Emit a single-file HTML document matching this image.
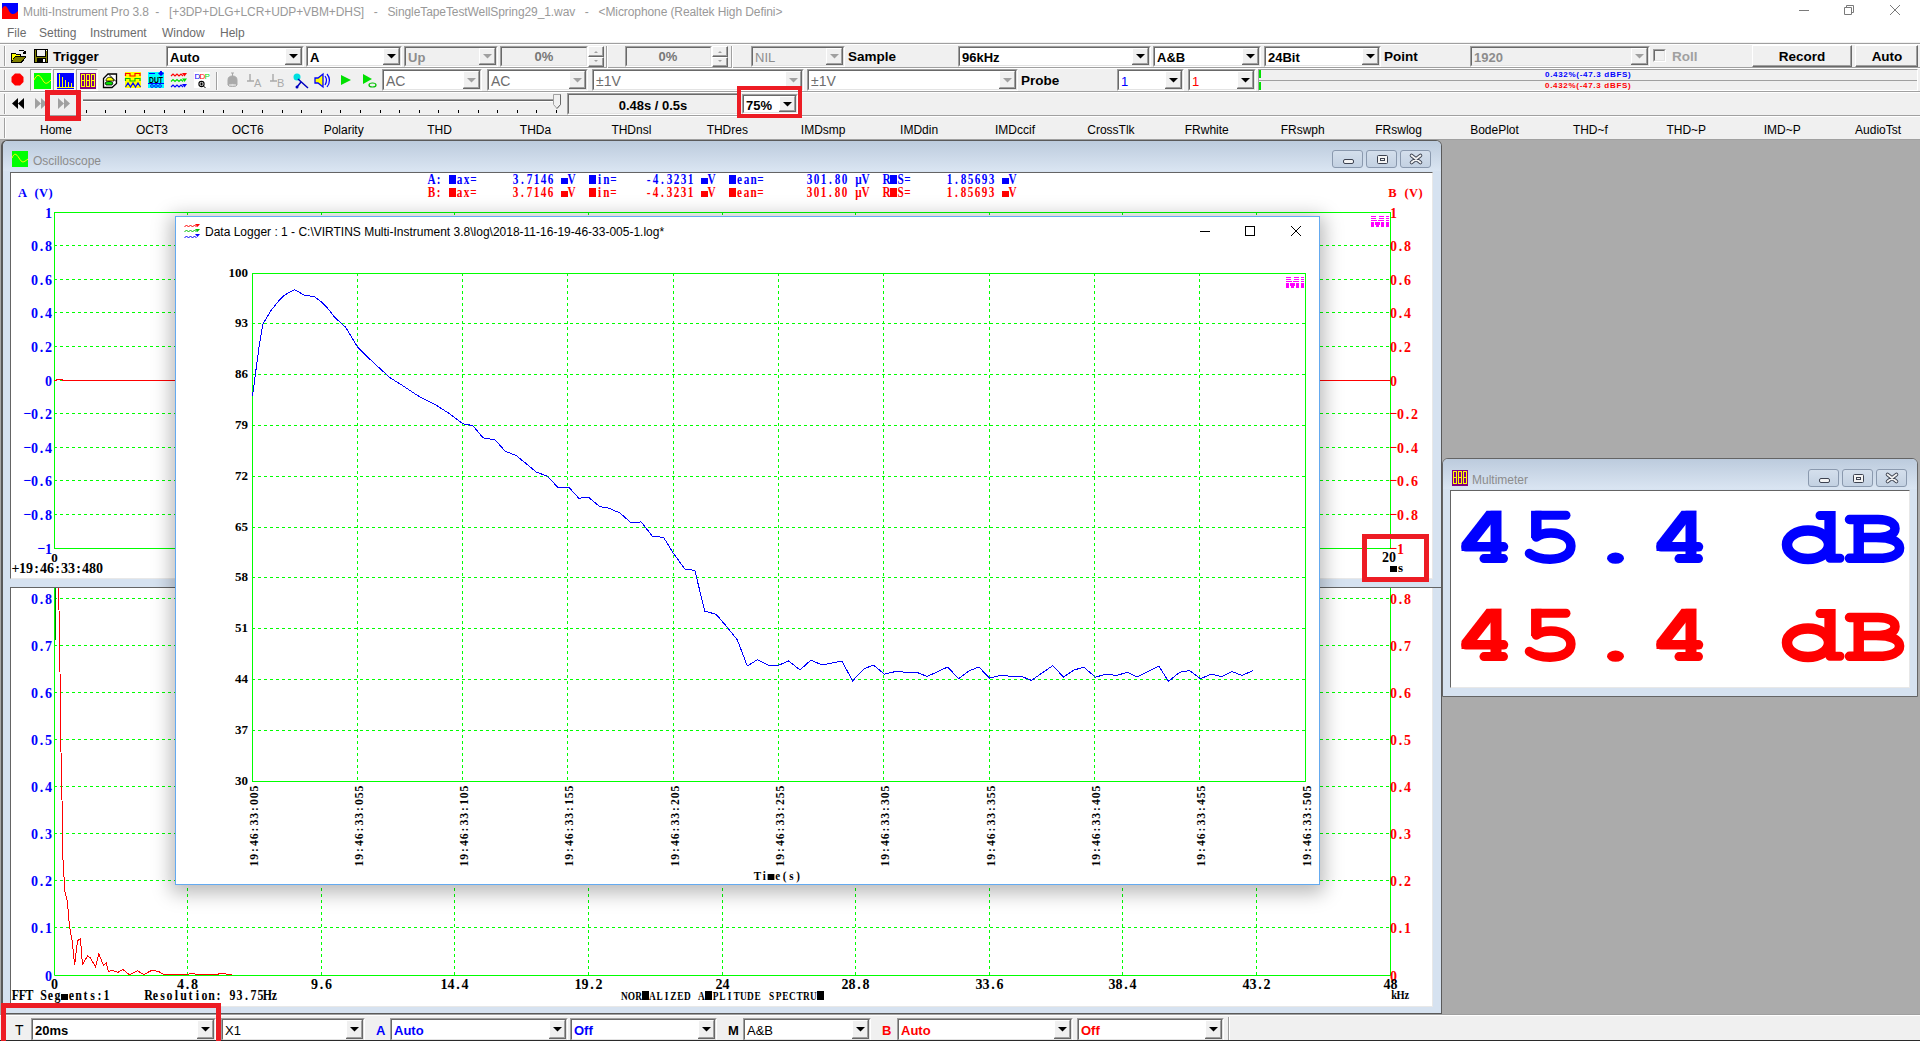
<!DOCTYPE html><html><head><meta charset="utf-8"><style>
html,body{margin:0;padding:0;width:1920px;height:1041px;overflow:hidden;background:#ababab;}
body div, body svg{position:absolute;}
svg{overflow:visible;}
</style></head><body><div style="left:0px;top:0px;width:1920px;height:42px;background:#fff;"></div>
<svg style="left:2px;top:3px" width="16" height="16"><rect width="16" height="16" fill="#0000ff"/><path d="M0 6 C2 2,4 2,6 6 S9 11,11 11 S14 10,16 8 V16 H0Z" fill="#ff0000"/></svg>
<div style="left:23.00px;top:5.04px;line-height:12px;height:12px;font:400 12px 'Liberation Sans', sans-serif;color:#999999;white-space:pre;letter-spacing:-0.09px;">Multi-Instrument Pro 3.8  -   [+3DP+DLG+LCR+UDP+VBM+DHS]   -   SingleTapeTestWellSpring29_1.wav   -   &lt;Microphone (Realtek High Defini&gt;</div>
<div style="left:1799px;top:10px;width:10px;height:1px;background:#7a7a7a;"></div>
<svg style="left:1840px;top:0px" width="20" height="20"><path d="M4.5 7.5h7v7h-7z M6.5 7.5v-2h7v7h-2" fill="none" stroke="#7a7a7a" stroke-width="1"/></svg>
<svg style="left:1885px;top:0px" width="20" height="20"><path d="M5 5L15 15M15 5L5 15" stroke="#7a7a7a" stroke-width="1"/></svg>
<div style="left:7.00px;top:26.04px;line-height:12px;height:12px;font:400 12px 'Liberation Sans', sans-serif;color:#6b6b6b;white-space:pre;">File</div>
<div style="left:39.00px;top:26.04px;line-height:12px;height:12px;font:400 12px 'Liberation Sans', sans-serif;color:#6b6b6b;white-space:pre;">Setting</div>
<div style="left:90.00px;top:26.04px;line-height:12px;height:12px;font:400 12px 'Liberation Sans', sans-serif;color:#6b6b6b;white-space:pre;">Instrument</div>
<div style="left:162.00px;top:26.04px;line-height:12px;height:12px;font:400 12px 'Liberation Sans', sans-serif;color:#6b6b6b;white-space:pre;">Window</div>
<div style="left:220.00px;top:26.04px;line-height:12px;height:12px;font:400 12px 'Liberation Sans', sans-serif;color:#6b6b6b;white-space:pre;">Help</div>
<div style="left:0px;top:42px;width:1920px;height:98px;background:#f0f0f0;"></div>
<div style="left:0px;top:43px;width:1920px;height:1px;background:#a0a0a0;"></div>
<div style="left:0px;top:44px;width:1920px;height:1px;background:#fff;"></div>
<div style="left:0px;top:67px;width:1920px;height:1px;background:#a0a0a0;"></div>
<div style="left:0px;top:68px;width:1920px;height:1px;background:#fff;"></div>
<div style="left:0px;top:91px;width:1920px;height:1px;background:#a0a0a0;"></div>
<div style="left:0px;top:92px;width:1920px;height:1px;background:#fff;"></div>
<div style="left:0px;top:115px;width:1920px;height:1px;background:#a0a0a0;"></div>
<div style="left:0px;top:116px;width:1920px;height:1px;background:#fff;"></div>
<div style="left:0px;top:139px;width:1920px;height:1px;background:#a0a0a0;"></div>
<div style="left:4px;top:46px;width:1px;height:20px;background:#a0a0a0;"></div>
<div style="left:5px;top:46px;width:1px;height:20px;background:#fff;"></div>
<div style="left:4px;top:70px;width:1px;height:20px;background:#a0a0a0;"></div>
<div style="left:5px;top:70px;width:1px;height:20px;background:#fff;"></div>
<div style="left:4px;top:94px;width:1px;height:20px;background:#a0a0a0;"></div>
<div style="left:5px;top:94px;width:1px;height:20px;background:#fff;"></div>
<div style="left:4px;top:118px;width:1px;height:20px;background:#a0a0a0;"></div>
<div style="left:5px;top:118px;width:1px;height:20px;background:#fff;"></div>
<svg style="left:10px;top:48px" width="18" height="16" shape-rendering="crispEdges"><path d="M1 5H5L6 6H11V8H16V9L12 15H1Z" fill="#000"/><path d="M2 6H5L6 7H10V8H5L2 13Z" fill="#ffff00"/><path d="M5 9H15L11 14H2Z" fill="#808000"/><path d="M9 3L10 2H13L15 4" fill="none" stroke="#000"/><path d="M14 3H16V6H13Z" fill="#000"/></svg>
<svg style="left:34px;top:49px" width="15" height="15" shape-rendering="crispEdges"><rect x="0" y="0" width="14" height="14" fill="#000"/><rect x="1" y="1" width="12" height="12" fill="#808000"/><rect x="2" y="0" width="10" height="8" fill="#000"/><rect x="3" y="1" width="8" height="6" fill="#f0f0f0"/><rect x="3" y="9" width="9" height="5" fill="#000"/><rect x="9" y="10" width="2" height="3" fill="#fff"/><rect x="12" y="1" width="1" height="1" fill="#fff"/></svg>
<div style="left:53.00px;top:49.07px;line-height:13.5px;height:13.5px;font:700 13.5px 'Liberation Sans', sans-serif;color:#000;white-space:pre;">Trigger</div>
<div style="left:166px;top:46px;width:138px;height:21px;background:#fff;border-top:1px solid #a0a0a0;border-left:1px solid #a0a0a0;border-bottom:1px solid #fff;border-right:1px solid #fff;box-sizing:border-box;"></div>
<div style="left:167px;top:47px;width:136px;height:19px;border-top:1px solid #696969;border-left:1px solid #696969;border-bottom:1px solid #e3e3e3;border-right:1px solid #e3e3e3;box-sizing:border-box;"></div>
<div style="left:285px;top:48px;width:17px;height:17px;background:#f0f0f0;border-right:1px solid #696969;border-bottom:1px solid #696969;box-sizing:border-box;"></div>
<div style="left:285px;top:48px;width:16px;height:16px;border-top:1px solid #fff;border-left:1px solid #fff;border-right:1px solid #a0a0a0;border-bottom:1px solid #a0a0a0;box-sizing:border-box;"></div>
<svg style="left:289px;top:54px" width="9" height="5"><path d="M0 0H9L4.5 4.5Z" fill="#000"/></svg>
<div style="left:170.00px;top:50.18px;line-height:13px;height:13px;font:700 13px 'Liberation Sans', sans-serif;color:#000;white-space:pre;">Auto</div>
<div style="left:306px;top:46px;width:96px;height:21px;background:#fff;border-top:1px solid #a0a0a0;border-left:1px solid #a0a0a0;border-bottom:1px solid #fff;border-right:1px solid #fff;box-sizing:border-box;"></div>
<div style="left:307px;top:47px;width:94px;height:19px;border-top:1px solid #696969;border-left:1px solid #696969;border-bottom:1px solid #e3e3e3;border-right:1px solid #e3e3e3;box-sizing:border-box;"></div>
<div style="left:383px;top:48px;width:17px;height:17px;background:#f0f0f0;border-right:1px solid #696969;border-bottom:1px solid #696969;box-sizing:border-box;"></div>
<div style="left:383px;top:48px;width:16px;height:16px;border-top:1px solid #fff;border-left:1px solid #fff;border-right:1px solid #a0a0a0;border-bottom:1px solid #a0a0a0;box-sizing:border-box;"></div>
<svg style="left:387px;top:54px" width="9" height="5"><path d="M0 0H9L4.5 4.5Z" fill="#000"/></svg>
<div style="left:310.00px;top:50.18px;line-height:13px;height:13px;font:700 13px 'Liberation Sans', sans-serif;color:#000;white-space:pre;">A</div>
<div style="left:404px;top:46px;width:94px;height:21px;background:#f0f0f0;border-top:1px solid #a0a0a0;border-left:1px solid #a0a0a0;border-bottom:1px solid #fff;border-right:1px solid #fff;box-sizing:border-box;"></div>
<div style="left:405px;top:47px;width:92px;height:19px;border-top:1px solid #696969;border-left:1px solid #696969;border-bottom:1px solid #e3e3e3;border-right:1px solid #e3e3e3;box-sizing:border-box;"></div>
<div style="left:479px;top:48px;width:17px;height:17px;background:#f0f0f0;border-right:1px solid #696969;border-bottom:1px solid #696969;box-sizing:border-box;"></div>
<div style="left:479px;top:48px;width:16px;height:16px;border-top:1px solid #fff;border-left:1px solid #fff;border-right:1px solid #a0a0a0;border-bottom:1px solid #a0a0a0;box-sizing:border-box;"></div>
<svg style="left:483px;top:54px" width="9" height="5"><path d="M0 0H9L4.5 4.5Z" fill="#a0a0a0"/></svg>
<div style="left:408.00px;top:50.18px;line-height:13px;height:13px;font:700 13px 'Liberation Sans', sans-serif;color:#8d8d8d;white-space:pre;">Up</div>
<div style="left:500px;top:46px;width:88px;height:21px;background:#f0f0f0;border-top:1px solid #a0a0a0;border-left:1px solid #a0a0a0;border-bottom:1px solid #fff;border-right:1px solid #fff;box-sizing:border-box;"></div>
<div style="left:501px;top:47px;width:86px;height:19px;border-top:1px solid #696969;border-left:1px solid #696969;border-bottom:1px solid #e3e3e3;border-right:1px solid #e3e3e3;box-sizing:border-box;"></div>
<div style="left:504.00px;top:49.30px;line-height:13px;height:13px;font:700 13px 'Liberation Sans', sans-serif;color:#777777;white-space:pre;width:80px;text-align:center;">0%</div>
<div style="left:588px;top:46px;width:16px;height:11px;background:#f0f0f0;border-top:1px solid #fff;border-left:1px solid #fff;border-right:1px solid #696969;border-bottom:1px solid #696969;box-sizing:border-box;"></div>
<div style="left:589px;top:47px;width:14px;height:9px;border-right:1px solid #a0a0a0;border-bottom:1px solid #a0a0a0;box-sizing:border-box;"></div>
<div style="left:588px;top:57px;width:16px;height:10px;background:#f0f0f0;border-top:1px solid #fff;border-left:1px solid #fff;border-right:1px solid #696969;border-bottom:1px solid #696969;box-sizing:border-box;"></div>
<div style="left:589px;top:58px;width:14px;height:8px;border-right:1px solid #a0a0a0;border-bottom:1px solid #a0a0a0;box-sizing:border-box;"></div>
<svg style="left:593px;top:50px" width="6" height="14"><path d="M1 3h4L3 1z M1 10h4L3 12z" fill="#a0a0a0"/></svg>
<div style="left:606px;top:46px;width:1px;height:22px;background:#a0a0a0;"></div>
<div style="left:607px;top:46px;width:1px;height:22px;background:#fff;"></div>
<div style="left:625px;top:46px;width:87px;height:21px;background:#f0f0f0;border-top:1px solid #a0a0a0;border-left:1px solid #a0a0a0;border-bottom:1px solid #fff;border-right:1px solid #fff;box-sizing:border-box;"></div>
<div style="left:626px;top:47px;width:85px;height:19px;border-top:1px solid #696969;border-left:1px solid #696969;border-bottom:1px solid #e3e3e3;border-right:1px solid #e3e3e3;box-sizing:border-box;"></div>
<div style="left:628.00px;top:49.30px;line-height:13px;height:13px;font:700 13px 'Liberation Sans', sans-serif;color:#777777;white-space:pre;width:80px;text-align:center;">0%</div>
<div style="left:712px;top:46px;width:16px;height:11px;background:#f0f0f0;border-top:1px solid #fff;border-left:1px solid #fff;border-right:1px solid #696969;border-bottom:1px solid #696969;box-sizing:border-box;"></div>
<div style="left:713px;top:47px;width:14px;height:9px;border-right:1px solid #a0a0a0;border-bottom:1px solid #a0a0a0;box-sizing:border-box;"></div>
<div style="left:712px;top:57px;width:16px;height:10px;background:#f0f0f0;border-top:1px solid #fff;border-left:1px solid #fff;border-right:1px solid #696969;border-bottom:1px solid #696969;box-sizing:border-box;"></div>
<div style="left:713px;top:58px;width:14px;height:8px;border-right:1px solid #a0a0a0;border-bottom:1px solid #a0a0a0;box-sizing:border-box;"></div>
<svg style="left:717px;top:50px" width="6" height="14"><path d="M1 3h4L3 1z M1 10h4L3 12z" fill="#a0a0a0"/></svg>
<div style="left:731px;top:46px;width:1px;height:22px;background:#a0a0a0;"></div>
<div style="left:732px;top:46px;width:1px;height:22px;background:#fff;"></div>
<div style="left:751px;top:46px;width:94px;height:21px;background:#f0f0f0;border-top:1px solid #a0a0a0;border-left:1px solid #a0a0a0;border-bottom:1px solid #fff;border-right:1px solid #fff;box-sizing:border-box;"></div>
<div style="left:752px;top:47px;width:92px;height:19px;border-top:1px solid #696969;border-left:1px solid #696969;border-bottom:1px solid #e3e3e3;border-right:1px solid #e3e3e3;box-sizing:border-box;"></div>
<div style="left:826px;top:48px;width:17px;height:17px;background:#f0f0f0;border-right:1px solid #696969;border-bottom:1px solid #696969;box-sizing:border-box;"></div>
<div style="left:826px;top:48px;width:16px;height:16px;border-top:1px solid #fff;border-left:1px solid #fff;border-right:1px solid #a0a0a0;border-bottom:1px solid #a0a0a0;box-sizing:border-box;"></div>
<svg style="left:830px;top:54px" width="9" height="5"><path d="M0 0H9L4.5 4.5Z" fill="#a0a0a0"/></svg>
<div style="left:755.00px;top:50.18px;line-height:13px;height:13px;font:400 13px 'Liberation Sans', sans-serif;color:#8d8d8d;white-space:pre;">NIL</div>
<div style="left:848.00px;top:49.07px;line-height:13.5px;height:13.5px;font:700 13.5px 'Liberation Sans', sans-serif;color:#000;white-space:pre;">Sample</div>
<div style="left:958px;top:46px;width:193px;height:21px;background:#fff;border-top:1px solid #a0a0a0;border-left:1px solid #a0a0a0;border-bottom:1px solid #fff;border-right:1px solid #fff;box-sizing:border-box;"></div>
<div style="left:959px;top:47px;width:191px;height:19px;border-top:1px solid #696969;border-left:1px solid #696969;border-bottom:1px solid #e3e3e3;border-right:1px solid #e3e3e3;box-sizing:border-box;"></div>
<div style="left:1132px;top:48px;width:17px;height:17px;background:#f0f0f0;border-right:1px solid #696969;border-bottom:1px solid #696969;box-sizing:border-box;"></div>
<div style="left:1132px;top:48px;width:16px;height:16px;border-top:1px solid #fff;border-left:1px solid #fff;border-right:1px solid #a0a0a0;border-bottom:1px solid #a0a0a0;box-sizing:border-box;"></div>
<svg style="left:1136px;top:54px" width="9" height="5"><path d="M0 0H9L4.5 4.5Z" fill="#000"/></svg>
<div style="left:962.00px;top:50.18px;line-height:13px;height:13px;font:700 13px 'Liberation Sans', sans-serif;color:#000;white-space:pre;">96kHz</div>
<div style="left:1153px;top:46px;width:108px;height:21px;background:#fff;border-top:1px solid #a0a0a0;border-left:1px solid #a0a0a0;border-bottom:1px solid #fff;border-right:1px solid #fff;box-sizing:border-box;"></div>
<div style="left:1154px;top:47px;width:106px;height:19px;border-top:1px solid #696969;border-left:1px solid #696969;border-bottom:1px solid #e3e3e3;border-right:1px solid #e3e3e3;box-sizing:border-box;"></div>
<div style="left:1242px;top:48px;width:17px;height:17px;background:#f0f0f0;border-right:1px solid #696969;border-bottom:1px solid #696969;box-sizing:border-box;"></div>
<div style="left:1242px;top:48px;width:16px;height:16px;border-top:1px solid #fff;border-left:1px solid #fff;border-right:1px solid #a0a0a0;border-bottom:1px solid #a0a0a0;box-sizing:border-box;"></div>
<svg style="left:1246px;top:54px" width="9" height="5"><path d="M0 0H9L4.5 4.5Z" fill="#000"/></svg>
<div style="left:1157.00px;top:50.18px;line-height:13px;height:13px;font:700 13px 'Liberation Sans', sans-serif;color:#000;white-space:pre;">A&amp;B</div>
<div style="left:1264px;top:46px;width:117px;height:21px;background:#fff;border-top:1px solid #a0a0a0;border-left:1px solid #a0a0a0;border-bottom:1px solid #fff;border-right:1px solid #fff;box-sizing:border-box;"></div>
<div style="left:1265px;top:47px;width:115px;height:19px;border-top:1px solid #696969;border-left:1px solid #696969;border-bottom:1px solid #e3e3e3;border-right:1px solid #e3e3e3;box-sizing:border-box;"></div>
<div style="left:1362px;top:48px;width:17px;height:17px;background:#f0f0f0;border-right:1px solid #696969;border-bottom:1px solid #696969;box-sizing:border-box;"></div>
<div style="left:1362px;top:48px;width:16px;height:16px;border-top:1px solid #fff;border-left:1px solid #fff;border-right:1px solid #a0a0a0;border-bottom:1px solid #a0a0a0;box-sizing:border-box;"></div>
<svg style="left:1366px;top:54px" width="9" height="5"><path d="M0 0H9L4.5 4.5Z" fill="#000"/></svg>
<div style="left:1268.00px;top:50.18px;line-height:13px;height:13px;font:700 13px 'Liberation Sans', sans-serif;color:#000;white-space:pre;">24Bit</div>
<div style="left:1384.00px;top:49.07px;line-height:13.5px;height:13.5px;font:700 13.5px 'Liberation Sans', sans-serif;color:#000;white-space:pre;">Point</div>
<div style="left:1470px;top:46px;width:180px;height:21px;background:#f0f0f0;border-top:1px solid #a0a0a0;border-left:1px solid #a0a0a0;border-bottom:1px solid #fff;border-right:1px solid #fff;box-sizing:border-box;"></div>
<div style="left:1471px;top:47px;width:178px;height:19px;border-top:1px solid #696969;border-left:1px solid #696969;border-bottom:1px solid #e3e3e3;border-right:1px solid #e3e3e3;box-sizing:border-box;"></div>
<div style="left:1631px;top:48px;width:17px;height:17px;background:#f0f0f0;border-right:1px solid #696969;border-bottom:1px solid #696969;box-sizing:border-box;"></div>
<div style="left:1631px;top:48px;width:16px;height:16px;border-top:1px solid #fff;border-left:1px solid #fff;border-right:1px solid #a0a0a0;border-bottom:1px solid #a0a0a0;box-sizing:border-box;"></div>
<svg style="left:1635px;top:54px" width="9" height="5"><path d="M0 0H9L4.5 4.5Z" fill="#a0a0a0"/></svg>
<div style="left:1474.00px;top:50.18px;line-height:13px;height:13px;font:700 13px 'Liberation Sans', sans-serif;color:#8d8d8d;white-space:pre;">1920</div>
<div style="left:1653px;top:49px;width:13px;height:13px;background:#f0f0f0;border-top:1px solid #a0a0a0;border-left:1px solid #a0a0a0;border-bottom:1px solid #fff;border-right:1px solid #fff;box-sizing:border-box;"></div>
<div style="left:1654px;top:50px;width:11px;height:11px;border-top:1px solid #696969;border-left:1px solid #696969;border-bottom:1px solid #e3e3e3;border-right:1px solid #e3e3e3;box-sizing:border-box;"></div>
<div style="left:1672.00px;top:48.57px;line-height:13.5px;height:13.5px;font:700 13.5px 'Liberation Sans', sans-serif;color:#a0a0a0;white-space:pre;">Roll</div>
<div style="left:1752px;top:45px;width:100px;height:22px;background:#f0f0f0;border-top:1px solid #fff;border-left:1px solid #fff;border-right:1px solid #696969;border-bottom:1px solid #696969;box-sizing:border-box;"></div>
<div style="left:1753px;top:46px;width:98px;height:20px;border-right:1px solid #a0a0a0;border-bottom:1px solid #a0a0a0;box-sizing:border-box;"></div>
<div style="left:1752.00px;top:48.57px;line-height:13.5px;height:13.5px;font:700 13.5px 'Liberation Sans', sans-serif;color:#000;white-space:pre;width:100px;text-align:center;">Record</div>
<div style="left:1855px;top:45px;width:63px;height:22px;background:#f0f0f0;border-top:1px solid #fff;border-left:1px solid #fff;border-right:1px solid #696969;border-bottom:1px solid #696969;box-sizing:border-box;"></div>
<div style="left:1856px;top:46px;width:61px;height:20px;border-right:1px solid #a0a0a0;border-bottom:1px solid #a0a0a0;box-sizing:border-box;"></div>
<div style="left:1855.50px;top:48.57px;line-height:13.5px;height:13.5px;font:700 13.5px 'Liberation Sans', sans-serif;color:#000;white-space:pre;width:63px;text-align:center;">Auto</div>
<svg style="left:11px;top:73px" width="14" height="13"><path d="M4 0.5h5l3.5 3.5v5l-3.5 3.5h-5l-3.5-3.5v-5z" fill="#ff0000"/></svg>
<div style="left:30px;top:69px;width:22px;height:22px;border-top:1px solid #a0a0a0;border-left:1px solid #a0a0a0;border-right:1px solid #fff;border-bottom:1px solid #fff;box-sizing:border-box;background:#f6f6f6;"></div>
<div style="left:53px;top:69px;width:22px;height:22px;border-top:1px solid #a0a0a0;border-left:1px solid #a0a0a0;border-right:1px solid #fff;border-bottom:1px solid #fff;box-sizing:border-box;background:#f6f6f6;"></div>
<div style="left:76px;top:69px;width:22px;height:22px;border-top:1px solid #a0a0a0;border-left:1px solid #a0a0a0;border-right:1px solid #fff;border-bottom:1px solid #fff;box-sizing:border-box;background:#f6f6f6;"></div>
<svg style="left:34px;top:73px" width="17" height="16"><rect width="17" height="16" fill="#00ff00"/><path d="M0 7 C3 1,5 1,8 6 S12 12,17 7" fill="none" stroke="#ffff00" stroke-width="1"/></svg>
<svg style="left:57px;top:73px" width="17" height="16"><rect width="17" height="16" fill="#0000ff"/><path d="M2.5 14V1M5.5 14V4M8.5 14V7M11.5 14V9M14.5 14V10M0 14.5H17" stroke="#ffff00" stroke-width="1"/></svg>
<svg style="left:80px;top:73px" width="16" height="16"><rect width="16" height="16" fill="#800080"/><rect x="1.5" y="1.5" width="3" height="12" fill="none" stroke="#ffff00" stroke-width="1"/><path d="M1.5 7.5h3" stroke="#ffff00"/><rect x="6.5" y="1.5" width="3" height="12" fill="none" stroke="#ffff00" stroke-width="1"/><path d="M6.5 7.5h3" stroke="#ffff00"/><rect x="11.5" y="1.5" width="3" height="12" fill="none" stroke="#ffff00" stroke-width="1"/><path d="M11.5 7.5h3" stroke="#ffff00"/></svg>
<svg style="left:102px;top:72px" width="17" height="17"><path d="M1.5 6.5L6 2H14.5V11.5L10 15.5H1.5Z" fill="#fff" stroke="#000" stroke-width="1.3"/><path d="M7 2.5L14 9.5" stroke="#000" stroke-width="1"/><path d="M4 8.5C4 5 9 4 11 7L12 9H4Z" fill="#ffff00" stroke="#000" stroke-width=".8"/><path d="M3 11C4 9 10 9 11 11L10 13H4Z" fill="#00e000" stroke="#000" stroke-width=".8"/></svg>
<svg style="left:125px;top:72px" width="16" height="16"><rect width="16" height="16" fill="#ffff00"/><path d="M0.5 4V1.5H5V4H10V1.5H15V4" fill="none" stroke="#ff0000" stroke-width="1.2"/><path d="M0.5 9V6.5H5V9H10V6.5H15V9" fill="none" stroke="#00c000" stroke-width="1.2"/><path d="M0.5 15L3 11L5.5 15L8 11L10.5 15L13 11L15.5 15" fill="none" stroke="#0000ff" stroke-width="1.2"/></svg>
<svg style="left:148px;top:72px" width="16" height="16"><rect width="16" height="16" fill="#00ffff"/><path d="M1 1.5H7M11 1.5L13 0V3ZM15 1.5L13 0V3Z" stroke="#0000ff" stroke-width="1.2" fill="#0000ff"/><text x="8" y="11" font-family="Liberation Sans" font-weight="700" font-size="8.5" fill="#000" text-anchor="middle" textLength="14" lengthAdjust="spacingAndGlyphs">DUT</text><path d="M0 11.5H16" stroke="#0000ff"/><circle cx="4" cy="14" r="1.4" fill="none" stroke="#0000ff" stroke-width=".9"/><circle cx="8" cy="14" r="1.4" fill="none" stroke="#0000ff" stroke-width=".9"/><circle cx="12" cy="14" r="1.4" fill="none" stroke="#0000ff" stroke-width=".9"/></svg>
<svg style="left:171px;top:72px" width="17" height="17"><path d="M0 4l2-2 2 2 2-2 2 2 2-2 2 2" fill="none" stroke="#ff0000" stroke-width="1.2"/><path d="M11 1h5l-2.5 3.5z" fill="#ff0000"/><path d="M0 9.5l2-2 2 2 2-2 2 2 2-2 2 2" fill="none" stroke="#00e000" stroke-width="1.2"/><path d="M11 6.5h5l-2.5 3.5z" fill="#00e000"/><path d="M0 15l2-2 2 2 2-2 2 2 2-2 2 2" fill="none" stroke="#0000ff" stroke-width="1.2"/><path d="M11 12h5l-2.5 3.5z" fill="#0000ff"/></svg>
<svg style="left:194px;top:72px" width="16" height="16"><rect width="16" height="16" fill="#fff"/><text x="0.5" y="7" font-family="Liberation Sans" font-size="8" fill="#0000ff">D</text><text x="5.5" y="7" font-family="Liberation Sans" font-size="8" fill="#ff0000">D</text><text x="10.5" y="7" font-family="Liberation Sans" font-size="8" fill="#00e000">P</text><circle cx="7.5" cy="12" r="2.6" fill="none" stroke="#000" stroke-width="1.1"/><path d="M9.5 14l2 2M6 12h3M7.5 10.5v3" stroke="#000" stroke-width="1"/></svg>
<div style="left:216px;top:72px;width:1px;height:18px;background:#a0a0a0;"></div>
<div style="left:217px;top:72px;width:1px;height:18px;background:#fff;"></div>
<svg style="left:224px;top:72px" width="16" height="16"><path d="M7 1h3M8.5 1v3M4 8C4 5 6 4 8.5 4S13 5 13 8v5H4z" fill="#a9a9a9" stroke="#a9a9a9"/><ellipse cx="8.5" cy="13" rx="4.5" ry="1.5" fill="#dcdcdc" stroke="#a9a9a9"/></svg>
<svg style="left:246px;top:72px" width="18" height="16"><path d="M4 2v7M1 9h7" stroke="#a9a9a9" stroke-width="1.4"/><text x="8" y="15" font-family="Liberation Sans" font-size="11" fill="#a9a9a9">A</text></svg>
<svg style="left:269px;top:72px" width="18" height="16"><path d="M4 2v7M1 9h7" stroke="#a9a9a9" stroke-width="1.4"/><text x="8" y="15" font-family="Liberation Sans" font-size="11" fill="#a9a9a9">B</text></svg>
<svg style="left:292px;top:72px" width="17" height="17"><circle cx="5" cy="5" r="3.5" fill="#00e0e0"/><path d="M6 7l10 9M9 10l-4 5" stroke="#0000c0" stroke-width="1.5"/><circle cx="5" cy="15" r="1.5" fill="#0000c0"/></svg>
<svg style="left:314px;top:72px" width="17" height="17"><path d="M1 6h3l5-4v13l-5-4H1z" fill="#ffff00" stroke="#0000ff" stroke-width="1.3"/><path d="M11 4q3 4 0 9M13 2q5 6 0 13" fill="none" stroke="#0000ff" stroke-width="1.2"/></svg>
<svg style="left:340px;top:74px" width="12" height="12"><path d="M1 1v10l10-5z" fill="#00e000"/></svg>
<svg style="left:362px;top:73px" width="15" height="15"><path d="M1 1v10l9-5z" fill="#00e000"/><ellipse cx="10.5" cy="12" rx="3.5" ry="2" fill="none" stroke="#00c000" stroke-width="1.2"/></svg>
<div style="left:382px;top:69px;width:100px;height:22px;background:#fff;border-top:1px solid #a0a0a0;border-left:1px solid #a0a0a0;border-bottom:1px solid #fff;border-right:1px solid #fff;box-sizing:border-box;"></div>
<div style="left:383px;top:70px;width:98px;height:20px;border-top:1px solid #696969;border-left:1px solid #696969;border-bottom:1px solid #e3e3e3;border-right:1px solid #e3e3e3;box-sizing:border-box;"></div>
<div style="left:463px;top:71px;width:17px;height:18px;background:#f0f0f0;border-right:1px solid #696969;border-bottom:1px solid #696969;box-sizing:border-box;"></div>
<div style="left:463px;top:71px;width:16px;height:17px;border-top:1px solid #fff;border-left:1px solid #fff;border-right:1px solid #a0a0a0;border-bottom:1px solid #a0a0a0;box-sizing:border-box;"></div>
<svg style="left:467px;top:78px" width="9" height="5"><path d="M0 0H9L4.5 4.5Z" fill="#a0a0a0"/></svg>
<div style="left:386.00px;top:73.19px;line-height:14px;height:14px;font:400 14px 'Liberation Sans', sans-serif;color:#6d6d6d;white-space:pre;">AC</div>
<div style="left:487px;top:69px;width:101px;height:22px;background:#fff;border-top:1px solid #a0a0a0;border-left:1px solid #a0a0a0;border-bottom:1px solid #fff;border-right:1px solid #fff;box-sizing:border-box;"></div>
<div style="left:488px;top:70px;width:99px;height:20px;border-top:1px solid #696969;border-left:1px solid #696969;border-bottom:1px solid #e3e3e3;border-right:1px solid #e3e3e3;box-sizing:border-box;"></div>
<div style="left:569px;top:71px;width:17px;height:18px;background:#f0f0f0;border-right:1px solid #696969;border-bottom:1px solid #696969;box-sizing:border-box;"></div>
<div style="left:569px;top:71px;width:16px;height:17px;border-top:1px solid #fff;border-left:1px solid #fff;border-right:1px solid #a0a0a0;border-bottom:1px solid #a0a0a0;box-sizing:border-box;"></div>
<svg style="left:573px;top:78px" width="9" height="5"><path d="M0 0H9L4.5 4.5Z" fill="#a0a0a0"/></svg>
<div style="left:491.00px;top:73.19px;line-height:14px;height:14px;font:400 14px 'Liberation Sans', sans-serif;color:#6d6d6d;white-space:pre;">AC</div>
<div style="left:592px;top:69px;width:212px;height:22px;background:#fff;border-top:1px solid #a0a0a0;border-left:1px solid #a0a0a0;border-bottom:1px solid #fff;border-right:1px solid #fff;box-sizing:border-box;"></div>
<div style="left:593px;top:70px;width:210px;height:20px;border-top:1px solid #696969;border-left:1px solid #696969;border-bottom:1px solid #e3e3e3;border-right:1px solid #e3e3e3;box-sizing:border-box;"></div>
<div style="left:785px;top:71px;width:17px;height:18px;background:#f0f0f0;border-right:1px solid #696969;border-bottom:1px solid #696969;box-sizing:border-box;"></div>
<div style="left:785px;top:71px;width:16px;height:17px;border-top:1px solid #fff;border-left:1px solid #fff;border-right:1px solid #a0a0a0;border-bottom:1px solid #a0a0a0;box-sizing:border-box;"></div>
<svg style="left:789px;top:78px" width="9" height="5"><path d="M0 0H9L4.5 4.5Z" fill="#a0a0a0"/></svg>
<div style="left:596.00px;top:73.19px;line-height:14px;height:14px;font:400 14px 'Liberation Sans', sans-serif;color:#6d6d6d;white-space:pre;">±1V</div>
<div style="left:807px;top:69px;width:211px;height:22px;background:#fff;border-top:1px solid #a0a0a0;border-left:1px solid #a0a0a0;border-bottom:1px solid #fff;border-right:1px solid #fff;box-sizing:border-box;"></div>
<div style="left:808px;top:70px;width:209px;height:20px;border-top:1px solid #696969;border-left:1px solid #696969;border-bottom:1px solid #e3e3e3;border-right:1px solid #e3e3e3;box-sizing:border-box;"></div>
<div style="left:999px;top:71px;width:17px;height:18px;background:#f0f0f0;border-right:1px solid #696969;border-bottom:1px solid #696969;box-sizing:border-box;"></div>
<div style="left:999px;top:71px;width:16px;height:17px;border-top:1px solid #fff;border-left:1px solid #fff;border-right:1px solid #a0a0a0;border-bottom:1px solid #a0a0a0;box-sizing:border-box;"></div>
<svg style="left:1003px;top:78px" width="9" height="5"><path d="M0 0H9L4.5 4.5Z" fill="#a0a0a0"/></svg>
<div style="left:811.00px;top:73.19px;line-height:14px;height:14px;font:400 14px 'Liberation Sans', sans-serif;color:#6d6d6d;white-space:pre;">±1V</div>
<div style="left:1021.00px;top:73.07px;line-height:13.5px;height:13.5px;font:700 13.5px 'Liberation Sans', sans-serif;color:#000;white-space:pre;">Probe</div>
<div style="left:1117px;top:69px;width:67px;height:22px;background:#fff;border-top:1px solid #a0a0a0;border-left:1px solid #a0a0a0;border-bottom:1px solid #fff;border-right:1px solid #fff;box-sizing:border-box;"></div>
<div style="left:1118px;top:70px;width:65px;height:20px;border-top:1px solid #696969;border-left:1px solid #696969;border-bottom:1px solid #e3e3e3;border-right:1px solid #e3e3e3;box-sizing:border-box;"></div>
<div style="left:1165px;top:71px;width:17px;height:18px;background:#f0f0f0;border-right:1px solid #696969;border-bottom:1px solid #696969;box-sizing:border-box;"></div>
<div style="left:1165px;top:71px;width:16px;height:17px;border-top:1px solid #fff;border-left:1px solid #fff;border-right:1px solid #a0a0a0;border-bottom:1px solid #a0a0a0;box-sizing:border-box;"></div>
<svg style="left:1169px;top:78px" width="9" height="5"><path d="M0 0H9L4.5 4.5Z" fill="#000"/></svg>
<div style="left:1121.00px;top:73.68px;line-height:13px;height:13px;font:400 13px 'Liberation Sans', sans-serif;color:#0000ff;white-space:pre;">1</div>
<div style="left:1188px;top:69px;width:68px;height:22px;background:#fff;border-top:1px solid #a0a0a0;border-left:1px solid #a0a0a0;border-bottom:1px solid #fff;border-right:1px solid #fff;box-sizing:border-box;"></div>
<div style="left:1189px;top:70px;width:66px;height:20px;border-top:1px solid #696969;border-left:1px solid #696969;border-bottom:1px solid #e3e3e3;border-right:1px solid #e3e3e3;box-sizing:border-box;"></div>
<div style="left:1237px;top:71px;width:17px;height:18px;background:#f0f0f0;border-right:1px solid #696969;border-bottom:1px solid #696969;box-sizing:border-box;"></div>
<div style="left:1237px;top:71px;width:16px;height:17px;border-top:1px solid #fff;border-left:1px solid #fff;border-right:1px solid #a0a0a0;border-bottom:1px solid #a0a0a0;box-sizing:border-box;"></div>
<svg style="left:1241px;top:78px" width="9" height="5"><path d="M0 0H9L4.5 4.5Z" fill="#000"/></svg>
<div style="left:1192.00px;top:73.68px;line-height:13px;height:13px;font:400 13px 'Liberation Sans', sans-serif;color:#ff0000;white-space:pre;">1</div>
<div style="left:1258px;top:69px;width:660px;height:22px;border-top:1px solid #a0a0a0;border-left:1px solid #a0a0a0;border-right:1px solid #fff;border-bottom:1px solid #fff;box-sizing:border-box;"></div>
<div style="left:1259px;top:80px;width:658px;height:1px;background:#a0a0a0;"></div>
<div style="left:1259px;top:70px;width:2px;height:8px;background:#00e000;"></div>
<div style="left:1259px;top:82px;width:2px;height:8px;background:#00e000;"></div>
<div style="left:1545.00px;top:69.93px;line-height:8px;height:8px;font:700 8px 'Liberation Sans', sans-serif;color:#0000ff;white-space:pre;letter-spacing:0.7px;">0.432%(-47.3 dBFS)</div>
<div style="left:1545.00px;top:80.93px;line-height:8px;height:8px;font:700 8px 'Liberation Sans', sans-serif;color:#ff0000;white-space:pre;letter-spacing:0.7px;">0.432%(-47.3 dBFS)</div>
<svg style="left:12px;top:98px" width="13" height="12"><path d="M0 5.5L6 0v11z M6 5.5L12 0v11z" fill="#000"/></svg>
<svg style="left:35px;top:98px" width="13" height="12"><path d="M0 0l6 5.5L0 11z M6 0l6 5.5L6 11z" fill="#a0a0a0"/></svg>
<svg style="left:58px;top:98px" width="13" height="12"><path d="M0 0l6 5.5L0 11z M6 0l6 5.5L6 11z" fill="#a0a0a0"/></svg>
<div style="left:45px;top:90px;width:36px;height:31px;border:5px solid #ed1c24;box-sizing:border-box;"></div>
<div style="left:83px;top:99px;width:476px;height:1px;background:#a0a0a0;"></div>
<div style="left:83px;top:100px;width:476px;height:1px;background:#696969;"></div>
<div style="left:83px;top:101px;width:476px;height:1px;background:#fff;"></div>
<svg style="left:0px;top:110px" width="570" height="4"><rect x="86" y="0" width="1" height="3" fill="#000"/><rect x="105" y="0" width="1" height="3" fill="#000"/><rect x="125" y="0" width="1" height="3" fill="#000"/><rect x="144" y="0" width="1" height="3" fill="#000"/><rect x="164" y="0" width="1" height="3" fill="#000"/><rect x="184" y="0" width="1" height="3" fill="#000"/><rect x="203" y="0" width="1" height="3" fill="#000"/><rect x="223" y="0" width="1" height="3" fill="#000"/><rect x="242" y="0" width="1" height="3" fill="#000"/><rect x="262" y="0" width="1" height="3" fill="#000"/><rect x="282" y="0" width="1" height="3" fill="#000"/><rect x="301" y="0" width="1" height="3" fill="#000"/><rect x="321" y="0" width="1" height="3" fill="#000"/><rect x="340" y="0" width="1" height="3" fill="#000"/><rect x="360" y="0" width="1" height="3" fill="#000"/><rect x="380" y="0" width="1" height="3" fill="#000"/><rect x="399" y="0" width="1" height="3" fill="#000"/><rect x="419" y="0" width="1" height="3" fill="#000"/><rect x="438" y="0" width="1" height="3" fill="#000"/><rect x="458" y="0" width="1" height="3" fill="#000"/><rect x="478" y="0" width="1" height="3" fill="#000"/><rect x="497" y="0" width="1" height="3" fill="#000"/><rect x="517" y="0" width="1" height="3" fill="#000"/><rect x="536" y="0" width="1" height="3" fill="#000"/><rect x="556" y="0" width="1" height="3" fill="#000"/></svg>
<svg style="left:553px;top:94px" width="9" height="16"><path d="M0.5 0.5h7v10l-3.5 4-3.5-4z" fill="#f0f0f0" stroke="#a0a0a0"/><path d="M7.5 0.5v10l-3.5 4" fill="none" stroke="#696969"/></svg>
<div style="left:567px;top:93px;width:174px;height:22px;background:#f0f0f0;border-top:1px solid #a0a0a0;border-left:1px solid #a0a0a0;border-bottom:1px solid #fff;border-right:1px solid #fff;box-sizing:border-box;"></div>
<div style="left:568px;top:94px;width:172px;height:20px;border-top:1px solid #696969;border-left:1px solid #696969;border-bottom:1px solid #e3e3e3;border-right:1px solid #e3e3e3;box-sizing:border-box;"></div>
<div style="left:568.00px;top:98.00px;line-height:13px;height:13px;font:700 13px 'Liberation Sans', sans-serif;color:#000;white-space:pre;width:170px;text-align:center;">0.48s / 0.5s</div>
<div style="left:742px;top:94px;width:56px;height:20px;background:#fff;border-top:1px solid #a0a0a0;border-left:1px solid #a0a0a0;border-bottom:1px solid #fff;border-right:1px solid #fff;box-sizing:border-box;"></div>
<div style="left:743px;top:95px;width:54px;height:18px;border-top:1px solid #696969;border-left:1px solid #696969;border-bottom:1px solid #e3e3e3;border-right:1px solid #e3e3e3;box-sizing:border-box;"></div>
<div style="left:779px;top:96px;width:17px;height:16px;background:#f0f0f0;border-right:1px solid #696969;border-bottom:1px solid #696969;box-sizing:border-box;"></div>
<div style="left:779px;top:96px;width:16px;height:15px;border-top:1px solid #fff;border-left:1px solid #fff;border-right:1px solid #a0a0a0;border-bottom:1px solid #a0a0a0;box-sizing:border-box;"></div>
<svg style="left:783px;top:102px" width="9" height="5"><path d="M0 0H9L4.5 4.5Z" fill="#000"/></svg>
<div style="left:746.00px;top:97.68px;line-height:13px;height:13px;font:700 13px 'Liberation Sans', sans-serif;color:#000;white-space:pre;">75%</div>
<div style="left:737px;top:86px;width:65px;height:32px;border:4px solid #ed1c24;box-sizing:border-box;"></div>
<div style="left:9.00px;top:123.04px;line-height:12px;height:12px;font:400 12px 'Liberation Sans', sans-serif;color:#000;white-space:pre;width:94px;text-align:center;">Home</div>
<div style="left:104.90px;top:123.04px;line-height:12px;height:12px;font:400 12px 'Liberation Sans', sans-serif;color:#000;white-space:pre;width:94px;text-align:center;">OCT3</div>
<div style="left:200.80px;top:123.04px;line-height:12px;height:12px;font:400 12px 'Liberation Sans', sans-serif;color:#000;white-space:pre;width:94px;text-align:center;">OCT6</div>
<div style="left:296.70px;top:123.04px;line-height:12px;height:12px;font:400 12px 'Liberation Sans', sans-serif;color:#000;white-space:pre;width:94px;text-align:center;">Polarity</div>
<div style="left:392.60px;top:123.04px;line-height:12px;height:12px;font:400 12px 'Liberation Sans', sans-serif;color:#000;white-space:pre;width:94px;text-align:center;">THD</div>
<div style="left:488.50px;top:123.04px;line-height:12px;height:12px;font:400 12px 'Liberation Sans', sans-serif;color:#000;white-space:pre;width:94px;text-align:center;">THDa</div>
<div style="left:584.40px;top:123.04px;line-height:12px;height:12px;font:400 12px 'Liberation Sans', sans-serif;color:#000;white-space:pre;width:94px;text-align:center;">THDnsl</div>
<div style="left:680.30px;top:123.04px;line-height:12px;height:12px;font:400 12px 'Liberation Sans', sans-serif;color:#000;white-space:pre;width:94px;text-align:center;">THDres</div>
<div style="left:776.20px;top:123.04px;line-height:12px;height:12px;font:400 12px 'Liberation Sans', sans-serif;color:#000;white-space:pre;width:94px;text-align:center;">IMDsmp</div>
<div style="left:872.10px;top:123.04px;line-height:12px;height:12px;font:400 12px 'Liberation Sans', sans-serif;color:#000;white-space:pre;width:94px;text-align:center;">IMDdin</div>
<div style="left:968.00px;top:123.04px;line-height:12px;height:12px;font:400 12px 'Liberation Sans', sans-serif;color:#000;white-space:pre;width:94px;text-align:center;">IMDccif</div>
<div style="left:1063.90px;top:123.04px;line-height:12px;height:12px;font:400 12px 'Liberation Sans', sans-serif;color:#000;white-space:pre;width:94px;text-align:center;">CrossTlk</div>
<div style="left:1159.80px;top:123.04px;line-height:12px;height:12px;font:400 12px 'Liberation Sans', sans-serif;color:#000;white-space:pre;width:94px;text-align:center;">FRwhite</div>
<div style="left:1255.70px;top:123.04px;line-height:12px;height:12px;font:400 12px 'Liberation Sans', sans-serif;color:#000;white-space:pre;width:94px;text-align:center;">FRswph</div>
<div style="left:1351.60px;top:123.04px;line-height:12px;height:12px;font:400 12px 'Liberation Sans', sans-serif;color:#000;white-space:pre;width:94px;text-align:center;">FRswlog</div>
<div style="left:1447.50px;top:123.04px;line-height:12px;height:12px;font:400 12px 'Liberation Sans', sans-serif;color:#000;white-space:pre;width:94px;text-align:center;">BodePlot</div>
<div style="left:1543.40px;top:123.04px;line-height:12px;height:12px;font:400 12px 'Liberation Sans', sans-serif;color:#000;white-space:pre;width:94px;text-align:center;">THD~f</div>
<div style="left:1639.30px;top:123.04px;line-height:12px;height:12px;font:400 12px 'Liberation Sans', sans-serif;color:#000;white-space:pre;width:94px;text-align:center;">THD~P</div>
<div style="left:1735.20px;top:123.04px;line-height:12px;height:12px;font:400 12px 'Liberation Sans', sans-serif;color:#000;white-space:pre;width:94px;text-align:center;">IMD~P</div>
<div style="left:1831.10px;top:123.04px;line-height:12px;height:12px;font:400 12px 'Liberation Sans', sans-serif;color:#000;white-space:pre;width:94px;text-align:center;">AudioTst</div>
<div style="left:0px;top:140px;width:1px;height:874px;background:#a8a8a8;"></div>
<div style="left:1px;top:140px;width:1441px;height:874px;background:#d6e2f0;border:1px solid #5a5a5a;border-left-width:2px;border-radius:6px 6px 0 0;box-sizing:border-box;"></div>
<div style="left:3px;top:141px;width:1438px;height:30px;background:linear-gradient(#bccbdd,#dae5f2);border-radius:5px 5px 0 0;"></div>
<svg style="left:12px;top:151px" width="16" height="16"><rect width="16" height="16" fill="#00ff00"/><path d="M0 7 C2 2,4 2,7 7 S11 12,16 8" fill="none" stroke="#ffff00" stroke-width="1"/></svg>
<div style="left:33.00px;top:153.84px;line-height:12px;height:12px;font:400 12px 'Liberation Sans', sans-serif;color:#8c8c8c;white-space:pre;">Oscilloscope</div>
<div style="left:1332px;top:150px;width:31px;height:18px;border:1px solid #8a99ae;border-radius:3px;background:linear-gradient(#d4dfec,#c3d1e2);box-sizing:border-box;"></div>
<div style="left:1366px;top:150px;width:31px;height:18px;border:1px solid #8a99ae;border-radius:3px;background:linear-gradient(#d4dfec,#c3d1e2);box-sizing:border-box;"></div>
<div style="left:1400px;top:150px;width:31px;height:18px;border:1px solid #8a99ae;border-radius:3px;background:linear-gradient(#d4dfec,#c3d1e2);box-sizing:border-box;"></div>
<svg style="left:1332px;top:150px" width="100" height="18"><rect x="11.5" y="9.5" width="10" height="4" rx="1.5" fill="#f4f4f4" stroke="#3c4250"/><rect x="45.5" y="5.5" width="10" height="8" rx="1" fill="#f4f4f4" stroke="#3c4250"/><rect x="48.5" y="8.5" width="4" height="2" fill="none" stroke="#3c4250"/><path d="M79.5 5.5L88.5 12.5M88.5 5.5L79.5 12.5" stroke="#3c4250" stroke-width="3.6" stroke-linecap="round"/><path d="M79.5 5.5L88.5 12.5M88.5 5.5L79.5 12.5" stroke="#f4f4f4" stroke-width="1.8" stroke-linecap="round"/></svg>
<div style="left:10px;top:172px;width:1423px;height:407px;background:#fff;border-top:1px solid #646464;border-left:1px solid #646464;border-right:1px solid #e8e8e8;border-bottom:1px solid #e8e8e8;box-sizing:border-box;"></div>
<div style="left:10px;top:587px;width:1423px;height:420px;background:#fff;border-top:1px solid #646464;border-left:1px solid #646464;border-right:1px solid #e8e8e8;border-bottom:1px solid #e8e8e8;box-sizing:border-box;"></div>
<div style="left:10px;top:587px;width:1431px;height:1px;background:#646464;"></div>
<svg style="left:0;top:0" width="1920" height="1041"><g shape-rendering="crispEdges"><path d="M54 245.5H1390" stroke="#00ff00" stroke-dasharray="3 3"/><path d="M54 279.5H1390" stroke="#00ff00" stroke-dasharray="3 3"/><path d="M54 312.5H1390" stroke="#00ff00" stroke-dasharray="3 3"/><path d="M54 346.5H1390" stroke="#00ff00" stroke-dasharray="3 3"/><path d="M54 380.5H1390" stroke="#00ff00" stroke-dasharray="3 3"/><path d="M54 413.5H1390" stroke="#00ff00" stroke-dasharray="3 3"/><path d="M54 447.5H1390" stroke="#00ff00" stroke-dasharray="3 3"/><path d="M54 480.5H1390" stroke="#00ff00" stroke-dasharray="3 3"/><path d="M54 514.5H1390" stroke="#00ff00" stroke-dasharray="3 3"/><path d="M187.5 212V548" stroke="#00ff00" stroke-dasharray="3 3"/><path d="M321.5 212V548" stroke="#00ff00" stroke-dasharray="3 3"/><path d="M454.5 212V548" stroke="#00ff00" stroke-dasharray="3 3"/><path d="M588.5 212V548" stroke="#00ff00" stroke-dasharray="3 3"/><path d="M722.5 212V548" stroke="#00ff00" stroke-dasharray="3 3"/><path d="M855.5 212V548" stroke="#00ff00" stroke-dasharray="3 3"/><path d="M989.5 212V548" stroke="#00ff00" stroke-dasharray="3 3"/><path d="M1122.5 212V548" stroke="#00ff00" stroke-dasharray="3 3"/><path d="M1256.5 212V548" stroke="#00ff00" stroke-dasharray="3 3"/><rect x="54.5" y="212.5" width="1336" height="336" fill="none" stroke="#00ff00"/><path d="M54 380.5H56V379.5H62V380.5H1390" fill="none" stroke="#ff0000"/><text x="48.50" y="218.00" font-family="Liberation Serif" font-weight="700" font-size="14" fill="#0000ff" text-anchor="middle" >1</text><text x="1393.50" y="218.00" font-family="Liberation Serif" font-weight="700" font-size="14" fill="#ff0000" text-anchor="middle" >1</text><text x="34.50 41.50 48.50" y="251.00 251.00 251.00" font-family="Liberation Serif" font-weight="700" font-size="14" fill="#0000ff" text-anchor="middle" >0.8</text><text x="1393.50 1400.50 1407.50" y="251.00 251.00 251.00" font-family="Liberation Serif" font-weight="700" font-size="14" fill="#ff0000" text-anchor="middle" >0.8</text><text x="34.50 41.50 48.50" y="285.00 285.00 285.00" font-family="Liberation Serif" font-weight="700" font-size="14" fill="#0000ff" text-anchor="middle" >0.6</text><text x="1393.50 1400.50 1407.50" y="285.00 285.00 285.00" font-family="Liberation Serif" font-weight="700" font-size="14" fill="#ff0000" text-anchor="middle" >0.6</text><text x="34.50 41.50 48.50" y="318.00 318.00 318.00" font-family="Liberation Serif" font-weight="700" font-size="14" fill="#0000ff" text-anchor="middle" >0.4</text><text x="1393.50 1400.50 1407.50" y="318.00 318.00 318.00" font-family="Liberation Serif" font-weight="700" font-size="14" fill="#ff0000" text-anchor="middle" >0.4</text><text x="34.50 41.50 48.50" y="352.00 352.00 352.00" font-family="Liberation Serif" font-weight="700" font-size="14" fill="#0000ff" text-anchor="middle" >0.2</text><text x="1393.50 1400.50 1407.50" y="352.00 352.00 352.00" font-family="Liberation Serif" font-weight="700" font-size="14" fill="#ff0000" text-anchor="middle" >0.2</text><text x="48.50" y="386.00" font-family="Liberation Serif" font-weight="700" font-size="14" fill="#0000ff" text-anchor="middle" >0</text><text x="1393.50" y="386.00" font-family="Liberation Serif" font-weight="700" font-size="14" fill="#ff0000" text-anchor="middle" >0</text><text x="27.50 34.50 41.50 48.50" y="417.50 419.00 419.00 419.00" font-family="Liberation Serif" font-weight="700" font-size="14" fill="#0000ff" text-anchor="middle" >−0.2</text><text x="1393.50 1400.50 1407.50 1414.50" y="417.50 419.00 419.00 419.00" font-family="Liberation Serif" font-weight="700" font-size="14" fill="#ff0000" text-anchor="middle" >−0.2</text><text x="27.50 34.50 41.50 48.50" y="451.50 453.00 453.00 453.00" font-family="Liberation Serif" font-weight="700" font-size="14" fill="#0000ff" text-anchor="middle" >−0.4</text><text x="1393.50 1400.50 1407.50 1414.50" y="451.50 453.00 453.00 453.00" font-family="Liberation Serif" font-weight="700" font-size="14" fill="#ff0000" text-anchor="middle" >−0.4</text><text x="27.50 34.50 41.50 48.50" y="484.50 486.00 486.00 486.00" font-family="Liberation Serif" font-weight="700" font-size="14" fill="#0000ff" text-anchor="middle" >−0.6</text><text x="1393.50 1400.50 1407.50 1414.50" y="484.50 486.00 486.00 486.00" font-family="Liberation Serif" font-weight="700" font-size="14" fill="#ff0000" text-anchor="middle" >−0.6</text><text x="27.50 34.50 41.50 48.50" y="518.50 520.00 520.00 520.00" font-family="Liberation Serif" font-weight="700" font-size="14" fill="#0000ff" text-anchor="middle" >−0.8</text><text x="1393.50 1400.50 1407.50 1414.50" y="518.50 520.00 520.00 520.00" font-family="Liberation Serif" font-weight="700" font-size="14" fill="#ff0000" text-anchor="middle" >−0.8</text><text x="41.50 48.50" y="552.50 554.00" font-family="Liberation Serif" font-weight="700" font-size="14" fill="#0000ff" text-anchor="middle" >−1</text><text x="1393.50 1400.50" y="552.50 554.00" font-family="Liberation Serif" font-weight="700" font-size="14" fill="#ff0000" text-anchor="middle" >−1</text><text x="22.50 36.50 43.50 50.50" y="196.50 196.50 196.50 196.50" font-family="Liberation Serif" font-weight="700" font-size="12.5" fill="#0000ff" text-anchor="middle" >A(V)</text><text x="1392.50 1406.50 1413.50 1420.50" y="196.50 196.50 196.50 196.50" font-family="Liberation Serif" font-weight="700" font-size="12.5" fill="#ff0000" text-anchor="middle" >B(V)</text><g transform="scale(0.8,1)"><text x="539.38 548.12 574.38 583.12 591.88 644.38 653.12 661.88 670.62 679.38 688.12 714.38 749.38 758.12 766.88 810.62 819.38 828.12 836.88 845.62 854.38 863.12 889.38 924.38 933.12 941.88 950.62 1011.88 1020.62 1029.38 1038.12 1046.88 1055.62 1073.12 1081.88 1108.12 1125.62 1134.38 1186.88 1195.62 1204.38 1213.12 1221.88 1230.62 1239.38 1265.62" y="184.00 184.00 184.00 184.00 184.00 184.00 184.00 184.00 184.00 184.00 184.00 184.00 184.00 184.00 184.00 184.00 184.00 184.00 184.00 184.00 184.00 184.00 184.00 184.00 184.00 184.00 184.00 184.00 184.00 184.00 184.00 184.00 184.00 184.00 184.00 184.00 184.00 184.00 184.00 184.00 184.00 184.00 184.00 184.00 184.00 184.00" font-family="Liberation Serif" font-weight="700" font-size="14" fill="#0000ff" text-anchor="middle" >A:ax=3.7146Vin=-4.3231Vean=301.80µVRS=1.85693V</text></g><rect x="449.00" y="175" width="7.00" height="9" fill="#0000ff"/><rect x="561.00" y="178" width="7.00" height="6" fill="#0000ff"/><rect x="589.00" y="175" width="7.00" height="9" fill="#0000ff"/><rect x="701.00" y="178" width="7.00" height="6" fill="#0000ff"/><rect x="729.00" y="175" width="7.00" height="9" fill="#0000ff"/><rect x="890.00" y="175" width="7.00" height="9" fill="#0000ff"/><rect x="1002.00" y="178" width="7.00" height="6" fill="#0000ff"/><g transform="scale(0.8,1)"><text x="539.38 548.12 574.38 583.12 591.88 644.38 653.12 661.88 670.62 679.38 688.12 714.38 749.38 758.12 766.88 810.62 819.38 828.12 836.88 845.62 854.38 863.12 889.38 924.38 933.12 941.88 950.62 1011.88 1020.62 1029.38 1038.12 1046.88 1055.62 1073.12 1081.88 1108.12 1125.62 1134.38 1186.88 1195.62 1204.38 1213.12 1221.88 1230.62 1239.38 1265.62" y="197.00 197.00 197.00 197.00 197.00 197.00 197.00 197.00 197.00 197.00 197.00 197.00 197.00 197.00 197.00 197.00 197.00 197.00 197.00 197.00 197.00 197.00 197.00 197.00 197.00 197.00 197.00 197.00 197.00 197.00 197.00 197.00 197.00 197.00 197.00 197.00 197.00 197.00 197.00 197.00 197.00 197.00 197.00 197.00 197.00 197.00" font-family="Liberation Serif" font-weight="700" font-size="14" fill="#ff0000" text-anchor="middle" >B:ax=3.7146Vin=-4.3231Vean=301.80µVRS=1.85693V</text></g><rect x="449.00" y="188" width="7.00" height="9" fill="#ff0000"/><rect x="561.00" y="191" width="7.00" height="6" fill="#ff0000"/><rect x="589.00" y="188" width="7.00" height="9" fill="#ff0000"/><rect x="701.00" y="191" width="7.00" height="6" fill="#ff0000"/><rect x="729.00" y="188" width="7.00" height="9" fill="#ff0000"/><rect x="890.00" y="188" width="7.00" height="9" fill="#ff0000"/><rect x="1002.00" y="191" width="7.00" height="6" fill="#ff0000"/><text x="54.50" y="561.50" font-family="Liberation Serif" font-weight="700" font-size="13" fill="#000" text-anchor="middle" >0</text><text x="15.50 22.50 29.50 36.50 43.50 50.50 57.50 64.50 71.50 78.50 85.50 92.50 99.50" y="573.00 573.00 573.00 573.00 573.00 573.00 573.00 573.00 573.00 573.00 573.00 573.00 573.00" font-family="Liberation Serif" font-weight="700" font-size="14" fill="#000" text-anchor="middle" >+19:46:33:480</text><text x="1385.50 1392.50" y="562.00 562.00" font-family="Liberation Serif" font-weight="700" font-size="14" fill="#000" text-anchor="middle" >20</text><text x="1400.50" y="572.00" font-family="Liberation Serif" font-weight="700" font-size="13" fill="#000" text-anchor="middle" >s</text><rect x="1390.00" y="566" width="7.00" height="6" fill="#000"/><g shape-rendering="crispEdges"><rect x="1371" y="216" width="5" height="1" fill="#ff00ff"/><rect x="1379" y="216" width="5" height="1" fill="#ff00ff"/><rect x="1386" y="216" width="3" height="1" fill="#ff00ff"/><rect x="1371" y="218" width="5" height="1" fill="#ff00ff"/><rect x="1379" y="218" width="5" height="1" fill="#ff00ff"/><rect x="1386" y="218" width="3" height="1" fill="#ff00ff"/><rect x="1371" y="220" width="6" height="1" fill="#ff00ff"/><rect x="1378" y="220" width="6" height="1" fill="#ff00ff"/><rect x="1386" y="220" width="3" height="1" fill="#ff00ff"/><rect x="1371" y="222" width="3" height="5" fill="#ff00ff"/><rect x="1381" y="222" width="3" height="5" fill="#ff00ff"/><rect x="1386" y="222" width="3" height="5" fill="#ff00ff"/><path d="M1374.5 222H1380.5L1379 227H1376Z" fill="#ff00ff"/></g></g></svg>
<div style="left:1362px;top:534px;width:67px;height:48px;border:5px solid #ed1c24;box-sizing:border-box;"></div>
<svg style="left:0;top:0" width="1920" height="1041"><path d="M54 927.5H1390" stroke="#00ff00" stroke-dasharray="3 3"/><path d="M54 880.5H1390" stroke="#00ff00" stroke-dasharray="3 3"/><path d="M54 833.5H1390" stroke="#00ff00" stroke-dasharray="3 3"/><path d="M54 786.5H1390" stroke="#00ff00" stroke-dasharray="3 3"/><path d="M54 739.5H1390" stroke="#00ff00" stroke-dasharray="3 3"/><path d="M54 692.5H1390" stroke="#00ff00" stroke-dasharray="3 3"/><path d="M54 645.5H1390" stroke="#00ff00" stroke-dasharray="3 3"/><path d="M54 598.5H1390" stroke="#00ff00" stroke-dasharray="3 3"/><path d="M187.5 588V975" stroke="#00ff00" stroke-dasharray="3 3"/><path d="M321.5 588V975" stroke="#00ff00" stroke-dasharray="3 3"/><path d="M454.5 588V975" stroke="#00ff00" stroke-dasharray="3 3"/><path d="M588.5 588V975" stroke="#00ff00" stroke-dasharray="3 3"/><path d="M722.5 588V975" stroke="#00ff00" stroke-dasharray="3 3"/><path d="M855.5 588V975" stroke="#00ff00" stroke-dasharray="3 3"/><path d="M989.5 588V975" stroke="#00ff00" stroke-dasharray="3 3"/><path d="M1122.5 588V975" stroke="#00ff00" stroke-dasharray="3 3"/><path d="M1256.5 588V975" stroke="#00ff00" stroke-dasharray="3 3"/><path d="M54.5 588V975.5H1390.5V588" fill="none" stroke="#00ff00"/><text x="48.50" y="981.00" font-family="Liberation Serif" font-weight="700" font-size="14" fill="#0000ff" text-anchor="middle" >0</text><text x="1393.50" y="981.00" font-family="Liberation Serif" font-weight="700" font-size="14" fill="#ff0000" text-anchor="middle" >0</text><text x="34.50 41.50 48.50" y="933.00 933.00 933.00" font-family="Liberation Serif" font-weight="700" font-size="14" fill="#0000ff" text-anchor="middle" >0.1</text><text x="1393.50 1400.50 1407.50" y="933.00 933.00 933.00" font-family="Liberation Serif" font-weight="700" font-size="14" fill="#ff0000" text-anchor="middle" >0.1</text><text x="34.50 41.50 48.50" y="886.00 886.00 886.00" font-family="Liberation Serif" font-weight="700" font-size="14" fill="#0000ff" text-anchor="middle" >0.2</text><text x="1393.50 1400.50 1407.50" y="886.00 886.00 886.00" font-family="Liberation Serif" font-weight="700" font-size="14" fill="#ff0000" text-anchor="middle" >0.2</text><text x="34.50 41.50 48.50" y="839.00 839.00 839.00" font-family="Liberation Serif" font-weight="700" font-size="14" fill="#0000ff" text-anchor="middle" >0.3</text><text x="1393.50 1400.50 1407.50" y="839.00 839.00 839.00" font-family="Liberation Serif" font-weight="700" font-size="14" fill="#ff0000" text-anchor="middle" >0.3</text><text x="34.50 41.50 48.50" y="792.00 792.00 792.00" font-family="Liberation Serif" font-weight="700" font-size="14" fill="#0000ff" text-anchor="middle" >0.4</text><text x="1393.50 1400.50 1407.50" y="792.00 792.00 792.00" font-family="Liberation Serif" font-weight="700" font-size="14" fill="#ff0000" text-anchor="middle" >0.4</text><text x="34.50 41.50 48.50" y="745.00 745.00 745.00" font-family="Liberation Serif" font-weight="700" font-size="14" fill="#0000ff" text-anchor="middle" >0.5</text><text x="1393.50 1400.50 1407.50" y="745.00 745.00 745.00" font-family="Liberation Serif" font-weight="700" font-size="14" fill="#ff0000" text-anchor="middle" >0.5</text><text x="34.50 41.50 48.50" y="698.00 698.00 698.00" font-family="Liberation Serif" font-weight="700" font-size="14" fill="#0000ff" text-anchor="middle" >0.6</text><text x="1393.50 1400.50 1407.50" y="698.00 698.00 698.00" font-family="Liberation Serif" font-weight="700" font-size="14" fill="#ff0000" text-anchor="middle" >0.6</text><text x="34.50 41.50 48.50" y="651.00 651.00 651.00" font-family="Liberation Serif" font-weight="700" font-size="14" fill="#0000ff" text-anchor="middle" >0.7</text><text x="1393.50 1400.50 1407.50" y="651.00 651.00 651.00" font-family="Liberation Serif" font-weight="700" font-size="14" fill="#ff0000" text-anchor="middle" >0.7</text><text x="34.50 41.50 48.50" y="604.00 604.00 604.00" font-family="Liberation Serif" font-weight="700" font-size="14" fill="#0000ff" text-anchor="middle" >0.8</text><text x="1393.50 1400.50 1407.50" y="604.00 604.00 604.00" font-family="Liberation Serif" font-weight="700" font-size="14" fill="#ff0000" text-anchor="middle" >0.8</text><text x="54.50" y="989.00" font-family="Liberation Serif" font-weight="700" font-size="14" fill="#000" text-anchor="middle" >0</text><text x="180.50 187.50 194.50" y="989.00 989.00 989.00" font-family="Liberation Serif" font-weight="700" font-size="14" fill="#000" text-anchor="middle" >4.8</text><text x="314.50 321.50 328.50" y="989.00 989.00 989.00" font-family="Liberation Serif" font-weight="700" font-size="14" fill="#000" text-anchor="middle" >9.6</text><text x="444.00 451.00 458.00 465.00" y="989.00 989.00 989.00 989.00" font-family="Liberation Serif" font-weight="700" font-size="14" fill="#000" text-anchor="middle" >14.4</text><text x="578.00 585.00 592.00 599.00" y="989.00 989.00 989.00 989.00" font-family="Liberation Serif" font-weight="700" font-size="14" fill="#000" text-anchor="middle" >19.2</text><text x="719.00 726.00" y="989.00 989.00" font-family="Liberation Serif" font-weight="700" font-size="14" fill="#000" text-anchor="middle" >24</text><text x="845.00 852.00 859.00 866.00" y="989.00 989.00 989.00 989.00" font-family="Liberation Serif" font-weight="700" font-size="14" fill="#000" text-anchor="middle" >28.8</text><text x="979.00 986.00 993.00 1000.00" y="989.00 989.00 989.00 989.00" font-family="Liberation Serif" font-weight="700" font-size="14" fill="#000" text-anchor="middle" >33.6</text><text x="1112.00 1119.00 1126.00 1133.00" y="989.00 989.00 989.00 989.00" font-family="Liberation Serif" font-weight="700" font-size="14" fill="#000" text-anchor="middle" >38.4</text><text x="1246.00 1253.00 1260.00 1267.00" y="989.00 989.00 989.00 989.00" font-family="Liberation Serif" font-weight="700" font-size="14" fill="#000" text-anchor="middle" >43.2</text><text x="1387.00 1394.00" y="989.00 989.00" font-family="Liberation Serif" font-weight="700" font-size="14" fill="#000" text-anchor="middle" >48</text><g transform="scale(0.8,1)"><text x="1742.69 1750.56 1758.44" y="999.00 999.00 999.00" font-family="Liberation Serif" font-weight="700" font-size="13" fill="#000" text-anchor="middle" >kHz</text></g><g transform="scale(0.85,1)"><text x="18.24 26.47 34.71 51.18 59.41 67.65 84.12 92.35 100.59 108.82 117.06 125.29" y="1000.00 1000.00 1000.00 1000.00 1000.00 1000.00 1000.00 1000.00 1000.00 1000.00 1000.00 1000.00" font-family="Liberation Serif" font-weight="700" font-size="14" fill="#000" text-anchor="middle" >FFTSegents:1</text></g><rect x="61.00" y="994" width="7.00" height="6" fill="#000"/><g transform="scale(0.85,1)"><text x="174.71 182.94 191.18 199.41 207.65 215.88 224.12 232.35 240.59 248.82 257.06 273.53 281.76 290.00 298.24 306.47 314.71 322.94" y="1000.00 1000.00 1000.00 1000.00 1000.00 1000.00 1000.00 1000.00 1000.00 1000.00 1000.00 1000.00 1000.00 1000.00 1000.00 1000.00 1000.00 1000.00" font-family="Liberation Serif" font-weight="700" font-size="14" fill="#000" text-anchor="middle" >Resolution:93.75Hz</text></g><g transform="scale(0.72,1)"><text x="867.36 877.08 886.81 906.25 915.97 925.69 935.42 945.14 954.86 974.31 993.75 1003.47 1013.19 1022.92 1032.64 1042.36 1052.08 1071.53 1081.25 1090.97 1100.69 1110.42 1120.14 1129.86" y="1000.00 1000.00 1000.00 1000.00 1000.00 1000.00 1000.00 1000.00 1000.00 1000.00 1000.00 1000.00 1000.00 1000.00 1000.00 1000.00 1000.00 1000.00 1000.00 1000.00 1000.00 1000.00 1000.00 1000.00" font-family="Liberation Serif" font-weight="700" font-size="13" fill="#000" text-anchor="middle" >NORALIZEDAPLITUDESPECTRU</text></g><rect x="642.00" y="991" width="7.00" height="9" fill="#000"/><rect x="705.00" y="991" width="7.00" height="9" fill="#000"/><rect x="817.00" y="991" width="7.00" height="9" fill="#000"/><path d="M58 588 L59 610 L60 672 L61 752 L62 800 L63 860 L63.8 871.5 L64.5 890.3 L67.4 901.8 L69.5 926.3 L72.4 942.2 L74.6 965.2 L77.5 940.7 L80.4 938.6 L82.5 964.5 L87.6 955.8 L90.4 958 L95.5 966.7 L98.8 953.7 L103.4 965.2 L106.3 963 L108.5 971.7 L112 970.3 L117.8 972.4 L122.9 969.5 L129.4 974.9 L137.3 970.7 L143.8 974.6 L151.7 970.3 L158.2 971.3 L164 974.6 L170 975 L176 974 L182 975 L192 973.5 L200 975 L208 974 L215 975 L222 973 L228 974.5 L232 975" fill="none" stroke="#ff0000" shape-rendering="crispEdges"/><path d="M55.5 588V640" stroke="#008000"/></svg>
<div style="left:175px;top:216px;width:1145px;height:669px;background:#fff;border:1px solid #64aaf0;box-sizing:border-box;box-shadow:0 4px 18px 4px rgba(0,0,0,0.28);"></div>
<svg style="left:184px;top:224px" width="17" height="16"><path d="M0.5 3l2-2 2 2 2-2 2 2 2-2 2 2" fill="none" stroke="#ff0000"/><path d="M11 0h5l-2.5 3z" fill="#ff0000"/><path d="M0.5 8l2-2 2 2 2-2 2 2 2-2 2 2" fill="none" stroke="#00c000"/><path d="M11 5h5l-2.5 3z" fill="#00c000"/><path d="M0.5 14l2-2 2 2 2-2 2 2 2-2 2 2" fill="none" stroke="#0000ff"/><path d="M11 10h5l-2.5 3z" fill="#0000ff"/></svg>
<div style="left:205.00px;top:225.14px;line-height:12px;height:12px;font:400 12px 'Liberation Sans', sans-serif;color:#000;white-space:pre;">Data Logger : 1 - C:\VIRTINS Multi-Instrument 3.8\log\2018-11-16-19-46-33-005-1.log*</div>
<svg style="left:1195px;top:222px" width="115" height="20"><path d="M5 9.5H15" stroke="#000"/><rect x="50.5" y="4.5" width="9" height="9" fill="none" stroke="#000"/><path d="M96 4L106 14M106 4L96 14" stroke="#000" stroke-width="1"/></svg>
<svg style="left:0;top:0" width="1920" height="1041"><path d="M252 323.5H1305" stroke="#00ff00" stroke-dasharray="3 3"/><path d="M252 374.5H1305" stroke="#00ff00" stroke-dasharray="3 3"/><path d="M252 425.5H1305" stroke="#00ff00" stroke-dasharray="3 3"/><path d="M252 476.5H1305" stroke="#00ff00" stroke-dasharray="3 3"/><path d="M252 527.5H1305" stroke="#00ff00" stroke-dasharray="3 3"/><path d="M252 577.5H1305" stroke="#00ff00" stroke-dasharray="3 3"/><path d="M252 628.5H1305" stroke="#00ff00" stroke-dasharray="3 3"/><path d="M252 679.5H1305" stroke="#00ff00" stroke-dasharray="3 3"/><path d="M252 730.5H1305" stroke="#00ff00" stroke-dasharray="3 3"/><path d="M357.5 273V781" stroke="#00ff00" stroke-dasharray="3 3"/><path d="M462.5 273V781" stroke="#00ff00" stroke-dasharray="3 3"/><path d="M567.5 273V781" stroke="#00ff00" stroke-dasharray="3 3"/><path d="M673.5 273V781" stroke="#00ff00" stroke-dasharray="3 3"/><path d="M778.5 273V781" stroke="#00ff00" stroke-dasharray="3 3"/><path d="M883.5 273V781" stroke="#00ff00" stroke-dasharray="3 3"/><path d="M989.5 273V781" stroke="#00ff00" stroke-dasharray="3 3"/><path d="M1094.5 273V781" stroke="#00ff00" stroke-dasharray="3 3"/><path d="M1199.5 273V781" stroke="#00ff00" stroke-dasharray="3 3"/><rect x="252.5" y="273.5" width="1053" height="508" fill="none" stroke="#00ff00"/><text x="248" y="277" font-family="Liberation Serif" font-weight="700" font-size="13" text-anchor="end">100</text><text x="248" y="327" font-family="Liberation Serif" font-weight="700" font-size="13" text-anchor="end">93</text><text x="248" y="378" font-family="Liberation Serif" font-weight="700" font-size="13" text-anchor="end">86</text><text x="248" y="429" font-family="Liberation Serif" font-weight="700" font-size="13" text-anchor="end">79</text><text x="248" y="480" font-family="Liberation Serif" font-weight="700" font-size="13" text-anchor="end">72</text><text x="248" y="531" font-family="Liberation Serif" font-weight="700" font-size="13" text-anchor="end">65</text><text x="248" y="581" font-family="Liberation Serif" font-weight="700" font-size="13" text-anchor="end">58</text><text x="248" y="632" font-family="Liberation Serif" font-weight="700" font-size="13" text-anchor="end">51</text><text x="248" y="683" font-family="Liberation Serif" font-weight="700" font-size="13" text-anchor="end">44</text><text x="248" y="734" font-family="Liberation Serif" font-weight="700" font-size="13" text-anchor="end">37</text><text x="248" y="785" font-family="Liberation Serif" font-weight="700" font-size="13" text-anchor="end">30</text><g transform="translate(257.5,867) rotate(-90)"><g transform="scale(0.9,1)"><text x="3.79 11.38 18.97 26.56 34.15 41.74 49.33 56.92 64.51 72.09 79.68 87.27" y="0.00 0.00 0.00 0.00 0.00 0.00 0.00 0.00 0.00 0.00 0.00 0.00" font-family="Liberation Serif" font-weight="700" font-size="13" fill="#000" text-anchor="middle" >19:46:33:005</text></g></g><g transform="translate(362.5,867) rotate(-90)"><g transform="scale(0.9,1)"><text x="3.79 11.38 18.97 26.56 34.15 41.74 49.33 56.92 64.51 72.09 79.68 87.27" y="0.00 0.00 0.00 0.00 0.00 0.00 0.00 0.00 0.00 0.00 0.00 0.00" font-family="Liberation Serif" font-weight="700" font-size="13" fill="#000" text-anchor="middle" >19:46:33:055</text></g></g><g transform="translate(467.5,867) rotate(-90)"><g transform="scale(0.9,1)"><text x="3.79 11.38 18.97 26.56 34.15 41.74 49.33 56.92 64.51 72.09 79.68 87.27" y="0.00 0.00 0.00 0.00 0.00 0.00 0.00 0.00 0.00 0.00 0.00 0.00" font-family="Liberation Serif" font-weight="700" font-size="13" fill="#000" text-anchor="middle" >19:46:33:105</text></g></g><g transform="translate(572.5,867) rotate(-90)"><g transform="scale(0.9,1)"><text x="3.79 11.38 18.97 26.56 34.15 41.74 49.33 56.92 64.51 72.09 79.68 87.27" y="0.00 0.00 0.00 0.00 0.00 0.00 0.00 0.00 0.00 0.00 0.00 0.00" font-family="Liberation Serif" font-weight="700" font-size="13" fill="#000" text-anchor="middle" >19:46:33:155</text></g></g><g transform="translate(678.5,867) rotate(-90)"><g transform="scale(0.9,1)"><text x="3.79 11.38 18.97 26.56 34.15 41.74 49.33 56.92 64.51 72.09 79.68 87.27" y="0.00 0.00 0.00 0.00 0.00 0.00 0.00 0.00 0.00 0.00 0.00 0.00" font-family="Liberation Serif" font-weight="700" font-size="13" fill="#000" text-anchor="middle" >19:46:33:205</text></g></g><g transform="translate(783.5,867) rotate(-90)"><g transform="scale(0.9,1)"><text x="3.79 11.38 18.97 26.56 34.15 41.74 49.33 56.92 64.51 72.09 79.68 87.27" y="0.00 0.00 0.00 0.00 0.00 0.00 0.00 0.00 0.00 0.00 0.00 0.00" font-family="Liberation Serif" font-weight="700" font-size="13" fill="#000" text-anchor="middle" >19:46:33:255</text></g></g><g transform="translate(888.5,867) rotate(-90)"><g transform="scale(0.9,1)"><text x="3.79 11.38 18.97 26.56 34.15 41.74 49.33 56.92 64.51 72.09 79.68 87.27" y="0.00 0.00 0.00 0.00 0.00 0.00 0.00 0.00 0.00 0.00 0.00 0.00" font-family="Liberation Serif" font-weight="700" font-size="13" fill="#000" text-anchor="middle" >19:46:33:305</text></g></g><g transform="translate(994.5,867) rotate(-90)"><g transform="scale(0.9,1)"><text x="3.79 11.38 18.97 26.56 34.15 41.74 49.33 56.92 64.51 72.09 79.68 87.27" y="0.00 0.00 0.00 0.00 0.00 0.00 0.00 0.00 0.00 0.00 0.00 0.00" font-family="Liberation Serif" font-weight="700" font-size="13" fill="#000" text-anchor="middle" >19:46:33:355</text></g></g><g transform="translate(1099.5,867) rotate(-90)"><g transform="scale(0.9,1)"><text x="3.79 11.38 18.97 26.56 34.15 41.74 49.33 56.92 64.51 72.09 79.68 87.27" y="0.00 0.00 0.00 0.00 0.00 0.00 0.00 0.00 0.00 0.00 0.00 0.00" font-family="Liberation Serif" font-weight="700" font-size="13" fill="#000" text-anchor="middle" >19:46:33:405</text></g></g><g transform="translate(1204.5,867) rotate(-90)"><g transform="scale(0.9,1)"><text x="3.79 11.38 18.97 26.56 34.15 41.74 49.33 56.92 64.51 72.09 79.68 87.27" y="0.00 0.00 0.00 0.00 0.00 0.00 0.00 0.00 0.00 0.00 0.00 0.00" font-family="Liberation Serif" font-weight="700" font-size="13" fill="#000" text-anchor="middle" >19:46:33:455</text></g></g><g transform="translate(1310.5,867) rotate(-90)"><g transform="scale(0.9,1)"><text x="3.79 11.38 18.97 26.56 34.15 41.74 49.33 56.92 64.51 72.09 79.68 87.27" y="0.00 0.00 0.00 0.00 0.00 0.00 0.00 0.00 0.00 0.00 0.00 0.00" font-family="Liberation Serif" font-weight="700" font-size="13" fill="#000" text-anchor="middle" >19:46:33:505</text></g></g><g transform="scale(0.85,1)"><text x="891.06 899.06 915.06 923.06 931.06 939.06" y="880.00 880.00 880.00 880.00 880.00 880.00" font-family="Liberation Serif" font-weight="700" font-size="13" fill="#000" text-anchor="middle" >Tie(s)</text></g><rect x="767.60" y="874" width="6.80" height="6" fill="#000"/><g shape-rendering="crispEdges"><rect x="1286" y="277" width="5" height="1" fill="#ff00ff"/><rect x="1294" y="277" width="5" height="1" fill="#ff00ff"/><rect x="1301" y="277" width="3" height="1" fill="#ff00ff"/><rect x="1286" y="279" width="5" height="1" fill="#ff00ff"/><rect x="1294" y="279" width="5" height="1" fill="#ff00ff"/><rect x="1301" y="279" width="3" height="1" fill="#ff00ff"/><rect x="1286" y="281" width="6" height="1" fill="#ff00ff"/><rect x="1293" y="281" width="6" height="1" fill="#ff00ff"/><rect x="1301" y="281" width="3" height="1" fill="#ff00ff"/><rect x="1286" y="283" width="3" height="5" fill="#ff00ff"/><rect x="1296" y="283" width="3" height="5" fill="#ff00ff"/><rect x="1301" y="283" width="3" height="5" fill="#ff00ff"/><path d="M1289.5 283H1295.5L1294 288H1291Z" fill="#ff00ff"/></g><path d="M252.5 396.1 L256.1 368.8 L259.1 346.7 L262.8 324.1 L271.2 310.3 L278.3 301.3 L284.3 295.2 L294.4 289.6 L304.5 295.2 L314.6 296.8 L320.6 301.3 L327.7 308.3 L334.8 317.4 L345.9 327.5 L357 346.3 L364 353.7 L380.2 368.8 L390.2 377.9 L400.3 384 L418.5 396.1 L434.6 404.2 L448.8 413.2 L462.9 423.7 L473 425.7 L483 437.8 L495.1 439.9 L505.2 451.2 L516.3 455.6 L526.2 463.7 L536.2 472 L547.5 476.2 L557.5 487 L568.7 487 L578.7 498.2 L588.7 497.4 L599.9 506.7 L608.7 508.2 L619.9 512.9 L631.2 522.9 L641.1 521.9 L652.4 536.2 L663.6 537.4 L673.6 553.6 L684.9 569.1 L694.8 570.4 L704.8 611.1 L716.1 614.3 L727.3 627.3 L737.3 639.8 L747.3 666 L757.3 659.8 L768.5 665.3 L778.5 665.3 L788.5 661 L800.1 669.9 L810.9 660.1 L822.1 665 L841.8 661.1 L852.6 680.8 L864.1 668.9 L873.3 665 L884.4 674.2 L895.2 671.6 L906.1 672.2 L916.6 672.2 L927.1 676.5 L947.7 667 L958.6 678.8 L969.1 670.9 L978.9 667 L989.4 678.1 L1000.2 675.5 L1011.1 676.2 L1020.9 676.2 L1031.4 680.4 L1052.7 665.7 L1063.6 677.1 L1074.1 669.9 L1083.9 667.3 L1095.4 677.1 L1106.2 674.2 L1116.7 675.5 L1127.2 672.2 L1137.1 677.1 L1158.7 666 L1168.6 681.4 L1179.7 672.2 L1189.6 670.6 L1200.4 678.8 L1211.2 674.2 L1221.7 676.5 L1232.2 671.6 L1242.1 675.5 L1252.9 670.6" fill="none" stroke="#0000ff" stroke-width="1" shape-rendering="crispEdges"/></svg>
<div style="left:1442px;top:458px;width:476px;height:239px;background:#d6e2f0;border:1px solid #646464;border-radius:6px 6px 0 0;box-sizing:border-box;"></div>
<div style="left:1443px;top:459px;width:474px;height:30px;background:linear-gradient(#bccbdd,#dae5f2);border-radius:5px 5px 0 0;"></div>
<svg style="left:1452px;top:470px" width="16" height="16"><rect width="16" height="16" fill="#800080"/><rect x="1.5" y="1.5" width="3" height="12" fill="none" stroke="#ffff00" stroke-width="1"/><path d="M1.5 7.5h3" stroke="#ffff00"/><rect x="6.5" y="1.5" width="3" height="12" fill="none" stroke="#ffff00" stroke-width="1"/><path d="M6.5 7.5h3" stroke="#ffff00"/><rect x="11.5" y="1.5" width="3" height="12" fill="none" stroke="#ffff00" stroke-width="1"/><path d="M11.5 7.5h3" stroke="#ffff00"/></svg>
<div style="left:1472.00px;top:472.84px;line-height:12px;height:12px;font:400 12px 'Liberation Sans', sans-serif;color:#8c8c8c;white-space:pre;">Multimeter</div>
<div style="left:1808px;top:469px;width:31px;height:18px;border:1px solid #8a99ae;border-radius:3px;background:linear-gradient(#d4dfec,#c3d1e2);box-sizing:border-box;"></div>
<div style="left:1842px;top:469px;width:31px;height:18px;border:1px solid #8a99ae;border-radius:3px;background:linear-gradient(#d4dfec,#c3d1e2);box-sizing:border-box;"></div>
<div style="left:1876px;top:469px;width:31px;height:18px;border:1px solid #8a99ae;border-radius:3px;background:linear-gradient(#d4dfec,#c3d1e2);box-sizing:border-box;"></div>
<svg style="left:1808px;top:469px" width="100" height="18"><rect x="11.5" y="9.5" width="10" height="4" rx="1.5" fill="#f4f4f4" stroke="#3c4250"/><rect x="45.5" y="5.5" width="10" height="8" rx="1" fill="#f4f4f4" stroke="#3c4250"/><rect x="48.5" y="8.5" width="4" height="2" fill="none" stroke="#3c4250"/><path d="M79.5 5.5L88.5 12.5M88.5 5.5L79.5 12.5" stroke="#3c4250" stroke-width="3.6" stroke-linecap="round"/><path d="M79.5 5.5L88.5 12.5M88.5 5.5L79.5 12.5" stroke="#f4f4f4" stroke-width="1.8" stroke-linecap="round"/></svg>
<div style="left:1450px;top:490px;width:460px;height:198px;background:#fff;border-top:1px solid #646464;border-left:1px solid #646464;border-right:1px solid #e8e8e8;border-bottom:1px solid #e8e8e8;box-sizing:border-box;"></div>
<svg style="left:0;top:0" width="1920" height="1041"><g transform="translate(0,0)" fill="none" stroke="#0000ff" stroke-linecap="round" stroke-linejoin="round"><path d="M1486.6 510.8H1501.5L1470 551H1461.5V543Z" fill="#0000ff" stroke="none"/><path d="M1496 510.8V558" stroke-width="11" stroke-linecap="butt"/><path d="M1466 546.8H1503.5" stroke-width="9.5"/><path d="M1484 558.6H1503.5" stroke-width="9"/><path d="M1536.3 510.8V538" stroke-width="10.5" stroke-linecap="butt"/><path d="M1536 515.2H1566" stroke-width="9"/><path d="M1536.3 537C1540 534,1546 532.9,1551 532.9C1563 532.9,1570.9 538.5,1570.9 546C1570.9 554,1563 559.2,1550 559.2C1541 559.2,1534 557,1529.5 553.5" stroke-width="9.5"/><ellipse cx="1615.5" cy="558.2" rx="8.5" ry="5.6" fill="#0000ff" stroke="none"/><path d="M1681.6 510.8H1696.5L1665 551H1656.5V543Z" fill="#0000ff" stroke="none"/><path d="M1691 510.8V558" stroke-width="11" stroke-linecap="butt"/><path d="M1661 546.8H1698.5" stroke-width="9.5"/><path d="M1679 558.6H1698.5" stroke-width="9"/><ellipse cx="1808" cy="544.8" rx="21" ry="14.3" fill="none" stroke-width="10.5"/><path d="M1830 511V558.3" stroke-width="11.3" stroke-linecap="butt"/><path d="M1820 515.5H1830M1830 558.3H1840" stroke-width="9"/><path d="M1849.5 519.5H1878C1890 519.5,1895 524,1895 528.5C1895 534,1888 537.6,1876 537.6H1858.7M1876 537.6C1892 537.6,1899.6 542,1899.6 548C1899.6 554,1892 558.3,1878 558.3H1849.5" fill="none" stroke-width="9.5"/><path d="M1858.7 519.5V558.3" stroke-width="10.5" stroke-linecap="butt"/></g><g transform="translate(0,98)" fill="none" stroke="#ff0000" stroke-linecap="round" stroke-linejoin="round"><path d="M1486.6 510.8H1501.5L1470 551H1461.5V543Z" fill="#ff0000" stroke="none"/><path d="M1496 510.8V558" stroke-width="11" stroke-linecap="butt"/><path d="M1466 546.8H1503.5" stroke-width="9.5"/><path d="M1484 558.6H1503.5" stroke-width="9"/><path d="M1536.3 510.8V538" stroke-width="10.5" stroke-linecap="butt"/><path d="M1536 515.2H1566" stroke-width="9"/><path d="M1536.3 537C1540 534,1546 532.9,1551 532.9C1563 532.9,1570.9 538.5,1570.9 546C1570.9 554,1563 559.2,1550 559.2C1541 559.2,1534 557,1529.5 553.5" stroke-width="9.5"/><ellipse cx="1615.5" cy="558.2" rx="8.5" ry="5.6" fill="#ff0000" stroke="none"/><path d="M1681.6 510.8H1696.5L1665 551H1656.5V543Z" fill="#ff0000" stroke="none"/><path d="M1691 510.8V558" stroke-width="11" stroke-linecap="butt"/><path d="M1661 546.8H1698.5" stroke-width="9.5"/><path d="M1679 558.6H1698.5" stroke-width="9"/><ellipse cx="1808" cy="544.8" rx="21" ry="14.3" fill="none" stroke-width="10.5"/><path d="M1830 511V558.3" stroke-width="11.3" stroke-linecap="butt"/><path d="M1820 515.5H1830M1830 558.3H1840" stroke-width="9"/><path d="M1849.5 519.5H1878C1890 519.5,1895 524,1895 528.5C1895 534,1888 537.6,1876 537.6H1858.7M1876 537.6C1892 537.6,1899.6 542,1899.6 548C1899.6 554,1892 558.3,1878 558.3H1849.5" fill="none" stroke-width="9.5"/><path d="M1858.7 519.5V558.3" stroke-width="10.5" stroke-linecap="butt"/></g></svg>
<div style="left:0px;top:1014px;width:1920px;height:27px;background:#f0f0f0;"></div>
<div style="left:0px;top:1014px;width:1920px;height:1px;background:#a0a0a0;"></div>
<div style="left:0px;top:1015px;width:1920px;height:1px;background:#fff;"></div>
<div style="left:4px;top:1017px;width:1px;height:24px;background:#a0a0a0;"></div>
<div style="left:5px;top:1017px;width:1px;height:24px;background:#fff;"></div>
<div style="left:15.00px;top:1022.15px;line-height:14px;height:14px;font:400 14px 'Liberation Sans', sans-serif;color:#000;white-space:pre;">T</div>
<div style="left:31px;top:1018px;width:185px;height:23px;background:#fff;border-top:1px solid #a0a0a0;border-left:1px solid #a0a0a0;border-bottom:1px solid #fff;border-right:1px solid #fff;box-sizing:border-box;"></div>
<div style="left:32px;top:1019px;width:183px;height:21px;border-top:1px solid #696969;border-left:1px solid #696969;border-bottom:1px solid #e3e3e3;border-right:1px solid #e3e3e3;box-sizing:border-box;"></div>
<div style="left:197px;top:1020px;width:17px;height:19px;background:#f0f0f0;border-right:1px solid #696969;border-bottom:1px solid #696969;box-sizing:border-box;"></div>
<div style="left:197px;top:1020px;width:16px;height:18px;border-top:1px solid #fff;border-left:1px solid #fff;border-right:1px solid #a0a0a0;border-bottom:1px solid #a0a0a0;box-sizing:border-box;"></div>
<svg style="left:201px;top:1027px" width="9" height="5"><path d="M0 0H9L4.5 4.5Z" fill="#000"/></svg>
<div style="left:35.00px;top:1023.18px;line-height:13px;height:13px;font:700 13px 'Liberation Sans', sans-serif;color:#000;white-space:pre;">20ms</div>
<div style="left:221px;top:1018px;width:144px;height:23px;background:#fff;border-top:1px solid #a0a0a0;border-left:1px solid #a0a0a0;border-bottom:1px solid #fff;border-right:1px solid #fff;box-sizing:border-box;"></div>
<div style="left:222px;top:1019px;width:142px;height:21px;border-top:1px solid #696969;border-left:1px solid #696969;border-bottom:1px solid #e3e3e3;border-right:1px solid #e3e3e3;box-sizing:border-box;"></div>
<div style="left:346px;top:1020px;width:17px;height:19px;background:#f0f0f0;border-right:1px solid #696969;border-bottom:1px solid #696969;box-sizing:border-box;"></div>
<div style="left:346px;top:1020px;width:16px;height:18px;border-top:1px solid #fff;border-left:1px solid #fff;border-right:1px solid #a0a0a0;border-bottom:1px solid #a0a0a0;box-sizing:border-box;"></div>
<svg style="left:350px;top:1027px" width="9" height="5"><path d="M0 0H9L4.5 4.5Z" fill="#000"/></svg>
<div style="left:225.00px;top:1023.18px;line-height:13px;height:13px;font:400 13px 'Liberation Sans', sans-serif;color:#000;white-space:pre;">X1</div>
<div style="left:376.00px;top:1023.00px;line-height:13px;height:13px;font:700 13px 'Liberation Sans', sans-serif;color:#0000ff;white-space:pre;">A</div>
<div style="left:390px;top:1018px;width:178px;height:23px;background:#fff;border-top:1px solid #a0a0a0;border-left:1px solid #a0a0a0;border-bottom:1px solid #fff;border-right:1px solid #fff;box-sizing:border-box;"></div>
<div style="left:391px;top:1019px;width:176px;height:21px;border-top:1px solid #696969;border-left:1px solid #696969;border-bottom:1px solid #e3e3e3;border-right:1px solid #e3e3e3;box-sizing:border-box;"></div>
<div style="left:549px;top:1020px;width:17px;height:19px;background:#f0f0f0;border-right:1px solid #696969;border-bottom:1px solid #696969;box-sizing:border-box;"></div>
<div style="left:549px;top:1020px;width:16px;height:18px;border-top:1px solid #fff;border-left:1px solid #fff;border-right:1px solid #a0a0a0;border-bottom:1px solid #a0a0a0;box-sizing:border-box;"></div>
<svg style="left:553px;top:1027px" width="9" height="5"><path d="M0 0H9L4.5 4.5Z" fill="#000"/></svg>
<div style="left:394.00px;top:1023.18px;line-height:13px;height:13px;font:700 13px 'Liberation Sans', sans-serif;color:#0000ff;white-space:pre;">Auto</div>
<div style="left:570px;top:1018px;width:147px;height:23px;background:#fff;border-top:1px solid #a0a0a0;border-left:1px solid #a0a0a0;border-bottom:1px solid #fff;border-right:1px solid #fff;box-sizing:border-box;"></div>
<div style="left:571px;top:1019px;width:145px;height:21px;border-top:1px solid #696969;border-left:1px solid #696969;border-bottom:1px solid #e3e3e3;border-right:1px solid #e3e3e3;box-sizing:border-box;"></div>
<div style="left:698px;top:1020px;width:17px;height:19px;background:#f0f0f0;border-right:1px solid #696969;border-bottom:1px solid #696969;box-sizing:border-box;"></div>
<div style="left:698px;top:1020px;width:16px;height:18px;border-top:1px solid #fff;border-left:1px solid #fff;border-right:1px solid #a0a0a0;border-bottom:1px solid #a0a0a0;box-sizing:border-box;"></div>
<svg style="left:702px;top:1027px" width="9" height="5"><path d="M0 0H9L4.5 4.5Z" fill="#000"/></svg>
<div style="left:574.00px;top:1023.18px;line-height:13px;height:13px;font:700 13px 'Liberation Sans', sans-serif;color:#0000ff;white-space:pre;">Off</div>
<div style="left:728.00px;top:1023.00px;line-height:13px;height:13px;font:700 13px 'Liberation Sans', sans-serif;color:#000;white-space:pre;">M</div>
<div style="left:743px;top:1018px;width:128px;height:23px;background:#fff;border-top:1px solid #a0a0a0;border-left:1px solid #a0a0a0;border-bottom:1px solid #fff;border-right:1px solid #fff;box-sizing:border-box;"></div>
<div style="left:744px;top:1019px;width:126px;height:21px;border-top:1px solid #696969;border-left:1px solid #696969;border-bottom:1px solid #e3e3e3;border-right:1px solid #e3e3e3;box-sizing:border-box;"></div>
<div style="left:852px;top:1020px;width:17px;height:19px;background:#f0f0f0;border-right:1px solid #696969;border-bottom:1px solid #696969;box-sizing:border-box;"></div>
<div style="left:852px;top:1020px;width:16px;height:18px;border-top:1px solid #fff;border-left:1px solid #fff;border-right:1px solid #a0a0a0;border-bottom:1px solid #a0a0a0;box-sizing:border-box;"></div>
<svg style="left:856px;top:1027px" width="9" height="5"><path d="M0 0H9L4.5 4.5Z" fill="#000"/></svg>
<div style="left:747.00px;top:1023.18px;line-height:13px;height:13px;font:400 13px 'Liberation Sans', sans-serif;color:#000;white-space:pre;">A&amp;B</div>
<div style="left:882.00px;top:1023.00px;line-height:13px;height:13px;font:700 13px 'Liberation Sans', sans-serif;color:#ff0000;white-space:pre;">B</div>
<div style="left:897px;top:1018px;width:176px;height:23px;background:#fff;border-top:1px solid #a0a0a0;border-left:1px solid #a0a0a0;border-bottom:1px solid #fff;border-right:1px solid #fff;box-sizing:border-box;"></div>
<div style="left:898px;top:1019px;width:174px;height:21px;border-top:1px solid #696969;border-left:1px solid #696969;border-bottom:1px solid #e3e3e3;border-right:1px solid #e3e3e3;box-sizing:border-box;"></div>
<div style="left:1054px;top:1020px;width:17px;height:19px;background:#f0f0f0;border-right:1px solid #696969;border-bottom:1px solid #696969;box-sizing:border-box;"></div>
<div style="left:1054px;top:1020px;width:16px;height:18px;border-top:1px solid #fff;border-left:1px solid #fff;border-right:1px solid #a0a0a0;border-bottom:1px solid #a0a0a0;box-sizing:border-box;"></div>
<svg style="left:1058px;top:1027px" width="9" height="5"><path d="M0 0H9L4.5 4.5Z" fill="#000"/></svg>
<div style="left:901.00px;top:1023.18px;line-height:13px;height:13px;font:700 13px 'Liberation Sans', sans-serif;color:#ff0000;white-space:pre;">Auto</div>
<div style="left:1077px;top:1018px;width:147px;height:23px;background:#fff;border-top:1px solid #a0a0a0;border-left:1px solid #a0a0a0;border-bottom:1px solid #fff;border-right:1px solid #fff;box-sizing:border-box;"></div>
<div style="left:1078px;top:1019px;width:145px;height:21px;border-top:1px solid #696969;border-left:1px solid #696969;border-bottom:1px solid #e3e3e3;border-right:1px solid #e3e3e3;box-sizing:border-box;"></div>
<div style="left:1205px;top:1020px;width:17px;height:19px;background:#f0f0f0;border-right:1px solid #696969;border-bottom:1px solid #696969;box-sizing:border-box;"></div>
<div style="left:1205px;top:1020px;width:16px;height:18px;border-top:1px solid #fff;border-left:1px solid #fff;border-right:1px solid #a0a0a0;border-bottom:1px solid #a0a0a0;box-sizing:border-box;"></div>
<svg style="left:1209px;top:1027px" width="9" height="5"><path d="M0 0H9L4.5 4.5Z" fill="#000"/></svg>
<div style="left:1081.00px;top:1023.18px;line-height:13px;height:13px;font:700 13px 'Liberation Sans', sans-serif;color:#ff0000;white-space:pre;">Off</div>
<div style="left:1228px;top:1017px;width:1px;height:24px;background:#a0a0a0;"></div>
<div style="left:1229px;top:1017px;width:1px;height:24px;background:#fff;"></div>
<div style="left:0px;top:1040px;width:1920px;height:1px;background:#2a2a2a;"></div>
<div style="left:1px;top:1003px;width:220px;height:45px;border:5px solid #ed1c24;box-sizing:border-box;"></div></body></html>
